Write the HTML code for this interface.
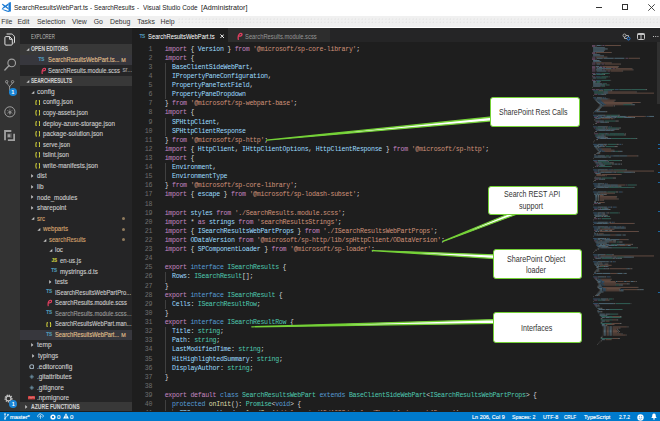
<!DOCTYPE html>
<html><head><meta charset="utf-8">
<style>
*{margin:0;padding:0;box-sizing:border-box}
html,body{width:660px;height:421px;overflow:hidden;background:#1e1e1e;font-family:"Liberation Sans",sans-serif}
.abs{position:absolute}
#title{left:0;top:0;width:660px;height:16px;background:#fff}
#title .t{left:13.6px;top:2.5px;line-height:10px;color:#222;white-space:nowrap}
#menu{left:0;top:16px;width:660px;height:10.5px;background:#f0f0f0}
#menu span{position:absolute;top:1px;font-size:6.9px;line-height:9px;color:#333;white-space:nowrap}
#menuline{left:0;top:26.5px;width:660px;height:1px;background:#fff}
#menudark{left:0;top:27.5px;width:660px;height:1px;background:#111}
#act{left:0;top:28px;width:20px;height:383px;background:#333}
#side{left:20px;top:28px;width:112px;height:383px;background:#252526;overflow:hidden}
#editor{left:132px;top:28px;width:528px;height:383px;background:#1e1e1e;overflow:hidden}
#tabs{left:0;top:0;width:528px;height:14px;background:#252526}
.tab{position:absolute;top:0;height:14px}
.ln{position:absolute;left:0;width:528px;height:9.1px;line-height:9.1px;white-space:pre;font-family:"Liberation Mono",monospace;font-size:6.6px;letter-spacing:-0.273px;color:#d4d4d4}
.ln .num{position:absolute;right:507.8px;color:#6e6e6e;text-align:right}
.ln .tx{position:absolute;left:32.65px}
#status{left:0;top:411.7px;width:660px;height:9.3px;background:#007acc;color:#fff}
#status span{position:absolute;top:1.8px;font-size:5.9px;line-height:7px;white-space:nowrap;-webkit-text-stroke:0.15px #fff}
.row{position:absolute;left:0;width:112px;height:10.53px;line-height:10.53px;font-size:6.3px;color:#ccc;white-space:nowrap}
.row .x{position:absolute}
.row span.x{-webkit-text-stroke:0.12px currentColor}
.row .nm{position:absolute;overflow:hidden;text-overflow:ellipsis}
.hdr{background:#383838;font-weight:bold;color:#ccc}
.callout{position:absolute;background:#fff;border:1.5px solid #7ed321;border-radius:3px;color:#3a3a3a;font-size:8px;line-height:10px;text-align:center;display:flex;align-items:center;justify-content:center}
.callout div{transform:scaleX(0.88);white-space:nowrap}
</style></head><body>
<div id="title" class="abs">
  <svg class="abs" style="left:0;top:0" width="13" height="13" viewBox="0 0 13 13">
    <g fill="#1a7ad4">
    <path d="M8.5 2.7 L10.9 2.0 V11.5 L8.5 10.9 Z"/>
    <path d="M1.4 9.0 C3.8 9.4 6.3 10.2 8.5 10.9 L10.9 11.5 L8.4 12.0 C6.2 11.5 3.3 10.3 1.4 9.0 Z"/>
    <path d="M1.8 4.3 L2.7 3.7 L5.3 5.6 L8.5 3.2 V4.9 L6.5 6.4 L8.5 7.9 V9.6 L5.3 7.2 L2.7 9.0 L1.8 8.4 L4.0 6.4 Z"/>
    </g>
  </svg>
  <div class="abs t" style="left:13.70px;transform:scaleX(0.8432);transform-origin:0 50%;font-size:7.7px;">SearchResultsWebPart.ts</div><div class="abs t" style="left:90.10px;transform:scaleX(0.7805);transform-origin:0 50%;font-size:7.7px;">-</div><div class="abs t" style="left:94.40px;transform:scaleX(0.8140);transform-origin:0 50%;font-size:7.7px;">SearchResults</div><div class="abs t" style="left:137.40px;transform:scaleX(0.7805);transform-origin:0 50%;font-size:7.7px;">-</div><div class="abs t" style="left:142.60px;transform:scaleX(0.8368);transform-origin:0 50%;font-size:7.7px;">Visual Studio Code</div><div class="abs t" style="left:200.80px;transform:scaleX(0.9362);transform-origin:0 50%;font-size:7.7px;">[Administrator]</div>
  <div class="abs" style="left:596px;top:6.5px;width:6px;height:1px;background:#333"></div>
  <div class="abs" style="left:622px;top:4px;width:6px;height:6px;border:1px solid #333"></div>
  <svg class="abs" style="left:648px;top:4px" width="7" height="7" viewBox="0 0 7 7"><path d="M0.3 0.3 L6.7 6.7 M6.7 0.3 L0.3 6.7" stroke="#333" stroke-width="0.9"/></svg>
</div>
<div id="menu" class="abs">
  <span style="left:1.2px">File</span>
  <span style="left:17.5px">Edit</span>
  <span style="left:37px">Selection</span>
  <span style="left:72px">View</span>
  <span style="left:93.7px">Go</span>
  <span style="left:110px">Debug</span>
  <span style="left:137.3px">Tasks</span>
  <span style="left:160.5px">Help</span>
  <div class="abs" style="left:178px;top:2px;width:482px;height:7px;background-image:radial-gradient(circle at 1px 1px,#e2e2e2 0.5px,transparent 0.8px);background-size:3.4px 3.4px"></div>
</div>
<div id="menuline" class="abs"></div>
<div id="menudark" class="abs"></div>

<div id="act" class="abs">
<svg class="abs" style="left:4px;top:5px" width="12" height="13" viewBox="0 0 12 13"><path d="M2.6 1.0 H7.6 C8.4 1.0 10.5 3.1 10.5 3.9 V9.2 C10.5 9.8 10.1 10.1 9.6 10.1" stroke="#e8e8e8" stroke-width="0.95" fill="none"/><path d="M0.9 4.6 Q0.9 3.6 1.9 3.6 H5.6 L8.3 6.3 V11.1 Q8.3 12.1 7.3 12.1 H1.9 Q0.9 12.1 0.9 11.1 Z M5.6 3.6 V6.3 H8.3" stroke="#e8e8e8" stroke-width="0.95" fill="none" stroke-linejoin="round"/></svg>
<svg class="abs" style="left:3.5px;top:29.5px" width="13" height="13" viewBox="0 0 13 13"><circle cx="7.7" cy="4.9" r="3.8" stroke="#a0a0a0" stroke-width="1.15" fill="none"/><path d="M5.1 7.6 L0.9 11.9" stroke="#a0a0a0" stroke-width="1.4" stroke-linecap="round"/></svg>
<svg class="abs" style="left:4.5px;top:52px" width="10" height="12" viewBox="0 0 10 12"><circle cx="1.7" cy="1.7" r="1.2" stroke="#a0a0a0" stroke-width="0.9" fill="none"/><circle cx="7.6" cy="1.7" r="1.2" stroke="#a0a0a0" stroke-width="0.9" fill="none"/><path d="M1.9 2.9 C2.2 5 4.6 5.2 4.6 7 V11 M7.4 2.9 C7.1 5 4.6 5.2 4.6 7" stroke="#a0a0a0" stroke-width="0.9" fill="none"/></svg>
<div class="abs" style="left:8.6px;top:60.2px;width:8.6px;height:8.2px;border-radius:50%;background:#1a85d6;color:#fff;font-size:5.6px;line-height:8.2px;text-align:center;font-weight:bold">1</div>
<svg class="abs" style="left:3.9px;top:78px" width="12" height="12" viewBox="0 0 12 12"><circle cx="5.85" cy="5.85" r="5.1" stroke="#a0a0a0" stroke-width="1" fill="none"/><path d="M5.85 2.6 V9.1 M3 4.2 L8.7 7.5 M8.7 4.2 L3 7.5" stroke="#a0a0a0" stroke-width="0.55" opacity="0.8"/><ellipse cx="6" cy="6.3" rx="1.3" ry="1.6" fill="#a0a0a0" opacity="0.7"/></svg>
<svg class="abs" style="left:4.1px;top:102px" width="11.2" height="11.2" viewBox="0 0 11 11"><path d="M1 10 V1 H7.2 M10 3.8 V10 H3.8" stroke="#a0a0a0" stroke-width="1.8" fill="none"/><rect x="3.2" y="3.2" width="4.6" height="4.6" fill="#555"/><rect x="3.6" y="4.2" width="2.6" height="2.8" fill="#a0a0a0"/></svg>
<svg class="abs" style="left:4.1px;top:366.4px" width="9" height="9" viewBox="0 0 9 9"><circle cx="4.5" cy="4.5" r="3.3" stroke="#c4c4c4" stroke-width="1.5" fill="none" stroke-dasharray="1.3 0.9"/><circle cx="4.5" cy="4.5" r="2.4" stroke="#c4c4c4" stroke-width="1.1" fill="none"/></svg>
<div class="abs" style="left:9.2px;top:371.8px;width:8px;height:8px;border-radius:50%;background:#1a85d6;color:#fff;font-size:5.4px;line-height:8px;text-align:center;font-weight:bold">1</div>
</div>

<div id="side" class="abs">
<div class="abs" style="left:10.9px;top:4.6px;line-height:8px;white-space:nowrap;transform:scaleX(0.6625);transform-origin:0 50%;font-size:6.6px;color:#bbb;">EXPLORER</div>
<div class="row hdr" style="top:16.20px"><svg class="x" style="left:6.20px;top:4.1px" width="4" height="3" viewBox="0 0 4 3"><path d="M3.3 0 V2.8 H0.3 Z" fill="#c5c5c5"/></svg><span class="x" style="left:10.8px;top:0.2px;transform:scaleX(0.7141);transform-origin:0 50%;font-size:6.9px;font-weight:bold;">OPEN EDITORS</span></div>
<div class="row" style="top:26.77px;background:#37373d;"><span class="x" style="left:18.50px;top:0;font-size:4.6px;font-weight:bold;color:#519aba;letter-spacing:-0.1px">TS</span><span class="x" style="left:27.80px;top:0.4px;color:#e2c08d;transform:scaleX(0.8460);transform-origin:0 50%;font-size:6.9px;">SearchResultsWebPart.ts...</span><span class="x" style="left:101.20px;color:#e2c08d;font-size:5.4px">M</span></div>
<div class="row" style="top:37.33px;"><svg class="x" style="left:20.80px;top:1.6px" width="5.5" height="7.3" viewBox="0 0 6 8"><path d="M1.3 7.4 C1.0 5.6 1.1 3.4 2.3 2.1 C3.3 1.0 5.1 1.1 5.0 2.4 C4.9 3.7 3.3 4.4 1.9 4.1" stroke="#e23f60" stroke-width="1.3" fill="none" stroke-linecap="round"/></svg><span class="x" style="left:27.80px;top:0.4px;color:#cccccc;transform:scaleX(0.8444);transform-origin:0 50%;font-size:6.9px;">SearchResults.module.scss</span><span class="x" style="left:102.40px;color:#999;font-size:6.3px">sr...</span></div>
<div class="row hdr" style="top:47.90px"><svg class="x" style="left:6.20px;top:4.1px" width="4" height="3" viewBox="0 0 4 3"><path d="M3.3 0 V2.8 H0.3 Z" fill="#c5c5c5"/></svg><span class="x" style="left:10.8px;top:0.2px;transform:scaleX(0.6782);transform-origin:0 50%;font-size:6.9px;font-weight:bold;">SEARCHRESULTS</span></div>
<div class="row" style="top:58.47px"><svg class="x" style="left:11.40px;top:4.1px" width="4" height="3" viewBox="0 0 4 3"><path d="M3.3 0 V2.8 H0.3 Z" fill="#c5c5c5"/></svg><span class="x" style="left:17.10px;top:0.4px;color:#ccc;transform:scaleX(0.9570);transform-origin:0 50%;font-size:6.9px;">config</span></div>
<div class="row" style="top:69.03px;"><svg class="x" style="left:14.60px;top:2.6px" width="5.6" height="5.6" viewBox="0 0 6 6"><path d="M1.9 0.4 C1.1 0.4 1.1 0.9 1.1 1.8 C1.1 2.6 0.9 3 0.4 3 C0.9 3 1.1 3.4 1.1 4.2 C1.1 5.1 1.1 5.6 1.9 5.6 M4.1 0.4 C4.9 0.4 4.9 0.9 4.9 1.8 C4.9 2.6 5.1 3 5.6 3 C5.1 3 4.9 3.4 4.9 4.2 C4.9 5.1 4.9 5.6 4.1 5.6" stroke="#d6d63c" stroke-width="1.15" fill="none"/></svg><span class="x" style="left:23.10px;top:0.4px;color:#ccc;transform:scaleX(0.9073);transform-origin:0 50%;font-size:6.9px;">config.json</span></div>
<div class="row" style="top:79.60px;"><svg class="x" style="left:14.60px;top:2.6px" width="5.6" height="5.6" viewBox="0 0 6 6"><path d="M1.9 0.4 C1.1 0.4 1.1 0.9 1.1 1.8 C1.1 2.6 0.9 3 0.4 3 C0.9 3 1.1 3.4 1.1 4.2 C1.1 5.1 1.1 5.6 1.9 5.6 M4.1 0.4 C4.9 0.4 4.9 0.9 4.9 1.8 C4.9 2.6 5.1 3 5.6 3 C5.1 3 4.9 3.4 4.9 4.2 C4.9 5.1 4.9 5.6 4.1 5.6" stroke="#d6d63c" stroke-width="1.15" fill="none"/></svg><span class="x" style="left:23.10px;top:0.4px;color:#ccc;transform:scaleX(0.8748);transform-origin:0 50%;font-size:6.9px;">copy-assets.json</span></div>
<div class="row" style="top:90.17px;"><svg class="x" style="left:14.60px;top:2.6px" width="5.6" height="5.6" viewBox="0 0 6 6"><path d="M1.9 0.4 C1.1 0.4 1.1 0.9 1.1 1.8 C1.1 2.6 0.9 3 0.4 3 C0.9 3 1.1 3.4 1.1 4.2 C1.1 5.1 1.1 5.6 1.9 5.6 M4.1 0.4 C4.9 0.4 4.9 0.9 4.9 1.8 C4.9 2.6 5.1 3 5.6 3 C5.1 3 4.9 3.4 4.9 4.2 C4.9 5.1 4.9 5.6 4.1 5.6" stroke="#d6d63c" stroke-width="1.15" fill="none"/></svg><span class="x" style="left:23.10px;top:0.4px;color:#ccc;transform:scaleX(0.9025);transform-origin:0 50%;font-size:6.9px;">deploy-azure-storage.json</span></div>
<div class="row" style="top:100.74px;"><svg class="x" style="left:14.60px;top:2.6px" width="5.6" height="5.6" viewBox="0 0 6 6"><path d="M1.9 0.4 C1.1 0.4 1.1 0.9 1.1 1.8 C1.1 2.6 0.9 3 0.4 3 C0.9 3 1.1 3.4 1.1 4.2 C1.1 5.1 1.1 5.6 1.9 5.6 M4.1 0.4 C4.9 0.4 4.9 0.9 4.9 1.8 C4.9 2.6 5.1 3 5.6 3 C5.1 3 4.9 3.4 4.9 4.2 C4.9 5.1 4.9 5.6 4.1 5.6" stroke="#d6d63c" stroke-width="1.15" fill="none"/></svg><span class="x" style="left:23.10px;top:0.4px;color:#ccc;transform:scaleX(0.8986);transform-origin:0 50%;font-size:6.9px;">package-solution.json</span></div>
<div class="row" style="top:111.30px;"><svg class="x" style="left:14.60px;top:2.6px" width="5.6" height="5.6" viewBox="0 0 6 6"><path d="M1.9 0.4 C1.1 0.4 1.1 0.9 1.1 1.8 C1.1 2.6 0.9 3 0.4 3 C0.9 3 1.1 3.4 1.1 4.2 C1.1 5.1 1.1 5.6 1.9 5.6 M4.1 0.4 C4.9 0.4 4.9 0.9 4.9 1.8 C4.9 2.6 5.1 3 5.6 3 C5.1 3 4.9 3.4 4.9 4.2 C4.9 5.1 4.9 5.6 4.1 5.6" stroke="#d6d63c" stroke-width="1.15" fill="none"/></svg><span class="x" style="left:23.10px;top:0.4px;color:#ccc;transform:scaleX(0.8629);transform-origin:0 50%;font-size:6.9px;">serve.json</span></div>
<div class="row" style="top:121.87px;"><svg class="x" style="left:14.60px;top:2.6px" width="5.6" height="5.6" viewBox="0 0 6 6"><path d="M1.9 0.4 C1.1 0.4 1.1 0.9 1.1 1.8 C1.1 2.6 0.9 3 0.4 3 C0.9 3 1.1 3.4 1.1 4.2 C1.1 5.1 1.1 5.6 1.9 5.6 M4.1 0.4 C4.9 0.4 4.9 0.9 4.9 1.8 C4.9 2.6 5.1 3 5.6 3 C5.1 3 4.9 3.4 4.9 4.2 C4.9 5.1 4.9 5.6 4.1 5.6" stroke="#d6d63c" stroke-width="1.15" fill="none"/></svg><span class="x" style="left:23.10px;top:0.4px;color:#ccc;transform:scaleX(0.9014);transform-origin:0 50%;font-size:6.9px;">tslint.json</span></div>
<div class="row" style="top:132.44px;"><svg class="x" style="left:14.60px;top:2.6px" width="5.6" height="5.6" viewBox="0 0 6 6"><path d="M1.9 0.4 C1.1 0.4 1.1 0.9 1.1 1.8 C1.1 2.6 0.9 3 0.4 3 C0.9 3 1.1 3.4 1.1 4.2 C1.1 5.1 1.1 5.6 1.9 5.6 M4.1 0.4 C4.9 0.4 4.9 0.9 4.9 1.8 C4.9 2.6 5.1 3 5.6 3 C5.1 3 4.9 3.4 4.9 4.2 C4.9 5.1 4.9 5.6 4.1 5.6" stroke="#d6d63c" stroke-width="1.15" fill="none"/></svg><span class="x" style="left:23.10px;top:0.4px;color:#ccc;transform:scaleX(0.9016);transform-origin:0 50%;font-size:6.9px;">write-manifests.json</span></div>
<div class="row" style="top:143.00px"><svg class="x" style="left:11.30px;top:3.1px" width="3" height="4" viewBox="0 0 3 4"><path d="M0.2 0.1 L2.4 1.9 L0.2 3.7 Z" fill="#c5c5c5"/></svg><span class="x" style="left:17.40px;top:0.4px;color:#ccc;transform:scaleX(0.8943);transform-origin:0 50%;font-size:6.9px;">dist</span></div>
<div class="row" style="top:153.57px"><svg class="x" style="left:11.30px;top:3.1px" width="3" height="4" viewBox="0 0 3 4"><path d="M0.2 0.1 L2.4 1.9 L0.2 3.7 Z" fill="#c5c5c5"/></svg><span class="x" style="left:17.40px;top:0.4px;color:#ccc;transform:scaleX(0.9412);transform-origin:0 50%;font-size:6.9px;">lib</span></div>
<div class="row" style="top:164.14px"><svg class="x" style="left:11.30px;top:3.1px" width="3" height="4" viewBox="0 0 3 4"><path d="M0.2 0.1 L2.4 1.9 L0.2 3.7 Z" fill="#c5c5c5"/></svg><span class="x" style="left:17.40px;top:0.4px;color:#ccc;transform:scaleX(0.8890);transform-origin:0 50%;font-size:6.9px;">node_modules</span></div>
<div class="row" style="top:174.70px"><svg class="x" style="left:11.30px;top:3.1px" width="3" height="4" viewBox="0 0 3 4"><path d="M0.2 0.1 L2.4 1.9 L0.2 3.7 Z" fill="#c5c5c5"/></svg><span class="x" style="left:17.20px;top:0.4px;color:#ccc;transform:scaleX(0.9103);transform-origin:0 50%;font-size:6.9px;">sharepoint</span></div>
<div class="row" style="top:185.27px"><svg class="x" style="left:11.20px;top:4.1px" width="4" height="3" viewBox="0 0 4 3"><path d="M3.3 0 V2.8 H0.3 Z" fill="#c5c5c5"/></svg><span class="x" style="left:17.10px;top:0.4px;color:#d7a46e;transform:scaleX(0.8707);transform-origin:0 50%;font-size:6.9px;">src</span><div class="x" style="left:102.20px;top:3.8px;width:3.2px;height:3.2px;border-radius:50%;background:#8f7a5c"></div></div>
<div class="row" style="top:195.84px"><svg class="x" style="left:17.10px;top:4.1px" width="4" height="3" viewBox="0 0 4 3"><path d="M3.3 0 V2.8 H0.3 Z" fill="#c5c5c5"/></svg><span class="x" style="left:23.10px;top:0.4px;color:#d7a46e;transform:scaleX(0.9010);transform-origin:0 50%;font-size:6.9px;">webparts</span><div class="x" style="left:102.20px;top:3.8px;width:3.2px;height:3.2px;border-radius:50%;background:#8f7a5c"></div></div>
<div class="row" style="top:206.41px"><svg class="x" style="left:22.90px;top:4.1px" width="4" height="3" viewBox="0 0 4 3"><path d="M3.3 0 V2.8 H0.3 Z" fill="#c5c5c5"/></svg><span class="x" style="left:28.90px;top:0.4px;color:#d7a46e;transform:scaleX(0.8404);transform-origin:0 50%;font-size:6.9px;">searchResults</span><div class="x" style="left:102.20px;top:3.8px;width:3.2px;height:3.2px;border-radius:50%;background:#8f7a5c"></div></div>
<div class="row" style="top:216.97px"><svg class="x" style="left:28.70px;top:4.1px" width="4" height="3" viewBox="0 0 4 3"><path d="M3.3 0 V2.8 H0.3 Z" fill="#c5c5c5"/></svg><span class="x" style="left:34.70px;top:0.4px;color:#ccc;transform:scaleX(0.9078);transform-origin:0 50%;font-size:6.9px;">loc</span></div>
<div class="row" style="top:227.54px;"><span class="x" style="left:31.60px;top:0;font-size:4.6px;font-weight:bold;color:#cbcb41;letter-spacing:-0.1px">JS</span><span class="x" style="left:40.10px;top:0.4px;color:#ccc;transform:scaleX(0.8782);transform-origin:0 50%;font-size:6.9px;">en-us.js</span></div>
<div class="row" style="top:238.11px;"><span class="x" style="left:31.30px;top:0;font-size:4.6px;font-weight:bold;color:#519aba;letter-spacing:-0.1px">TS</span><span class="x" style="left:40.10px;top:0.4px;color:#ccc;transform:scaleX(0.8914);transform-origin:0 50%;font-size:6.9px;">mystrings.d.ts</span></div>
<div class="row" style="top:248.67px"><svg class="x" style="left:28.50px;top:3.1px" width="3" height="4" viewBox="0 0 3 4"><path d="M0.2 0.1 L2.4 1.9 L0.2 3.7 Z" fill="#c5c5c5"/></svg><span class="x" style="left:34.70px;top:0.4px;color:#ccc;transform:scaleX(0.8721);transform-origin:0 50%;font-size:6.9px;">tests</span></div>
<div class="row" style="top:259.24px;"><span class="x" style="left:26.20px;top:0;font-size:4.6px;font-weight:bold;color:#519aba;letter-spacing:-0.1px">TS</span><span class="x" style="left:34.70px;top:0.4px;color:#ccc;transform:scaleX(0.8467);transform-origin:0 50%;font-size:6.9px;">ISearchResultsWebPartPro...</span></div>
<div class="row" style="top:269.81px;"><svg class="x" style="left:26.70px;top:1.6px" width="5.5" height="7.3" viewBox="0 0 6 8"><path d="M1.3 7.4 C1.0 5.6 1.1 3.4 2.3 2.1 C3.3 1.0 5.1 1.1 5.0 2.4 C4.9 3.7 3.3 4.4 1.9 4.1" stroke="#e23f60" stroke-width="1.3" fill="none" stroke-linecap="round"/></svg><span class="x" style="left:34.70px;top:0.4px;color:#ccc;transform:scaleX(0.8456);transform-origin:0 50%;font-size:6.9px;">SearchResults.module.scss</span></div>
<div class="row" style="top:280.38px;"><span class="x" style="left:26.20px;top:0;font-size:4.6px;font-weight:bold;color:#519aba;letter-spacing:-0.1px">TS</span><span class="x" style="left:34.70px;top:0.4px;color:#9a9a9a;transform:scaleX(0.8428);transform-origin:0 50%;font-size:6.9px;">SearchResults.module.scss...</span></div>
<div class="row" style="top:290.94px;"><svg class="x" style="left:26.20px;top:2.6px" width="5.6" height="5.6" viewBox="0 0 6 6"><path d="M1.9 0.4 C1.1 0.4 1.1 0.9 1.1 1.8 C1.1 2.6 0.9 3 0.4 3 C0.9 3 1.1 3.4 1.1 4.2 C1.1 5.1 1.1 5.6 1.9 5.6 M4.1 0.4 C4.9 0.4 4.9 0.9 4.9 1.8 C4.9 2.6 5.1 3 5.6 3 C5.1 3 4.9 3.4 4.9 4.2 C4.9 5.1 4.9 5.6 4.1 5.6" stroke="#d6d63c" stroke-width="1.15" fill="none"/></svg><span class="x" style="left:34.70px;top:0.4px;color:#ccc;transform:scaleX(0.8265);transform-origin:0 50%;font-size:6.9px;">SearchResultsWebPart.man...</span></div>
<div class="row" style="top:301.51px;background:#37373d;"><span class="x" style="left:26.20px;top:0;font-size:4.6px;font-weight:bold;color:#519aba;letter-spacing:-0.1px">TS</span><span class="x" style="left:34.70px;top:0.4px;color:#e2c08d;transform:scaleX(0.8312);transform-origin:0 50%;font-size:6.9px;">SearchResultsWebPart...</span><span class="x" style="left:101.20px;color:#e2c08d;font-size:5.4px">M</span></div>
<div class="row" style="top:312.08px"><svg class="x" style="left:11.20px;top:3.1px" width="3" height="4" viewBox="0 0 3 4"><path d="M0.2 0.1 L2.4 1.9 L0.2 3.7 Z" fill="#c5c5c5"/></svg><span class="x" style="left:17.40px;top:0.4px;color:#ccc;transform:scaleX(0.9525);transform-origin:0 50%;font-size:6.9px;">temp</span></div>
<div class="row" style="top:322.64px"><svg class="x" style="left:11.50px;top:3.1px" width="3" height="4" viewBox="0 0 3 4"><path d="M0.2 0.1 L2.4 1.9 L0.2 3.7 Z" fill="#c5c5c5"/></svg><span class="x" style="left:17.50px;top:0.4px;color:#ccc;transform:scaleX(0.9247);transform-origin:0 50%;font-size:6.9px;">typings</span></div>
<div class="row" style="top:333.21px;"><svg class="x" style="left:8.80px;top:2.6px" width="5.5" height="5.5" viewBox="0 0 5.5 5.5"><circle cx="2.75" cy="2.75" r="2.0" stroke="#9fb0bd" stroke-width="1.1" fill="none"/></svg><span class="x" style="left:17.00px;top:0.4px;color:#ccc;transform:scaleX(0.9402);transform-origin:0 50%;font-size:6.9px;">.editorconfig</span></div>
<div class="row" style="top:343.78px;"><svg class="x" style="left:8.80px;top:2.6px" width="5.5" height="5.5" viewBox="0 0 5.5 5.5"><path d="M2.75 0.3 L5.2 2.75 L2.75 5.2 L0.3 2.75 Z" fill="#4a6472"/><path d="M2.75 1.6 L3.9 2.75 L2.75 3.9 L1.6 2.75 Z" fill="#6f8a98"/></svg><span class="x" style="left:17.00px;top:0.4px;color:#ccc;transform:scaleX(0.9268);transform-origin:0 50%;font-size:6.9px;">.gitattributes</span></div>
<div class="row" style="top:354.34px;"><svg class="x" style="left:8.80px;top:2.6px" width="5.5" height="5.5" viewBox="0 0 5.5 5.5"><path d="M2.75 0.3 L5.2 2.75 L2.75 5.2 L0.3 2.75 Z" fill="#4a6472"/><path d="M2.75 1.6 L3.9 2.75 L2.75 3.9 L1.6 2.75 Z" fill="#6f8a98"/></svg><span class="x" style="left:17.00px;top:0.4px;color:#ccc;transform:scaleX(0.9450);transform-origin:0 50%;font-size:6.9px;">.gitignore</span></div>
<div class="row" style="top:364.91px;"><svg class="x" style="left:8.10px;top:3.5px" width="7.2" height="3.6" viewBox="0 0 7.2 3.6"><rect x="0" y="0" width="7.2" height="3.4" fill="#c93636"/><path d="M1 2.6 V1 H2.6 V2.6 M3.6 2.6 V1 H6.2 V2.6 M4.9 1 V2.2" stroke="#e8a0a0" stroke-width="0.5" fill="none"/></svg><span class="x" style="left:17.00px;top:0.4px;color:#ccc;transform:scaleX(0.9338);transform-origin:0 50%;font-size:6.9px;">.npmignore</span></div>
<div class="row hdr" style="top:373.70px"><svg class="x" style="left:5.10px;top:3.1px" width="3" height="4" viewBox="0 0 3 4"><path d="M0.2 0.1 L2.4 1.9 L0.2 3.7 Z" fill="#c5c5c5"/></svg><span class="x" style="left:10.8px;top:0.2px;transform:scaleX(0.7381);transform-origin:0 50%;font-size:6.9px;font-weight:bold;">AZURE FUNCTIONS</span></div>
</div>

<div id="editor" class="abs">
  <div id="tabs" class="abs">
    <div class="tab" style="left:0;width:96px;background:#1e1e1e">
<span class="abs" style="left:7.4px;top:5.6px;font-size:4.8px;line-height:5px;font-weight:bold;color:#519aba;letter-spacing:-0.2px">TS</span><span class="abs" style="left:16.2px;top:5px;line-height:7px;color:#fff;white-space:nowrap;transform:scaleX(0.8323);transform-origin:0 50%;font-size:7px;">SearchResultsWebPart.ts</span><svg class="abs" style="left:87.6px;top:6.4px" width="4.4" height="4.4" viewBox="0 0 5 5"><path d="M0.5 0.5 L4.5 4.5 M4.5 0.5 L0.5 4.5" stroke="#fff" stroke-width="1.1"/></svg>
    </div>
    <div class="tab" style="left:96px;width:102px;background:#2d2d2d">
<svg class="abs" style="left:8.6px;top:4px" width="6" height="8" viewBox="0 0 6 8"><path d="M1.3 7.4 C1.0 5.6 1.1 3.4 2.3 2.1 C3.3 1.0 5.1 1.1 5.0 2.4 C4.9 3.7 3.3 4.4 1.9 4.1" stroke="#e23f60" stroke-width="1.3" fill="none" stroke-linecap="round"/></svg><span class="abs" style="left:17px;top:5px;line-height:7px;color:#969696;white-space:nowrap;transform:scaleX(0.8301);transform-origin:0 50%;font-size:7px;">SearchResults.module.scss</span>
    </div>
<svg class="abs" style="left:490px;top:4.5px" width="9" height="8" viewBox="0 0 9 8"><circle cx="2.5" cy="2.5" r="1.5" stroke="#c5c5c5" stroke-width="0.8" fill="none"/><circle cx="6.5" cy="5.5" r="1.5" stroke="#3794ff" stroke-width="0.8" fill="none"/><path d="M4 2.5 H6.5 V4 M2.5 4 V5.5 H5" stroke="#c5c5c5" stroke-width="0.8" fill="none"/></svg><svg class="abs" style="left:504.5px;top:4.8px" width="8" height="7" viewBox="0 0 8 7"><rect x="0.5" y="0.5" width="7" height="6" rx="1" stroke="#c5c5c5" stroke-width="1" fill="none"/><path d="M4 0.5 V6.5" stroke="#c5c5c5" stroke-width="1"/><rect x="0.5" y="0.5" width="7" height="1.5" fill="#c5c5c5"/></svg><div class="abs" style="left:521px;top:7.5px;width:1px;height:1px;background:#c5c5c5;box-shadow:2.2px 0 0 #c5c5c5,4.4px 0 0 #c5c5c5"></div>
  </div>
  <div class="abs" style="left:0;top:16.6px;width:528px;height:380px">
<div class="ln" style="top:0.00px"><span class="num">1</span><span class="tx"><span style="color:#c586c0">import</span> { <span style="color:#9cdcfe">Version</span> } <span style="color:#c586c0">from</span> <span style="color:#ce9178">&#x27;@microsoft/sp-core-library&#x27;</span>;</span></div>
<div class="ln" style="top:9.12px"><span class="num">2</span><span class="tx"><span style="color:#c586c0">import</span> {</span></div>
<div class="ln" style="top:18.23px"><div style="position:absolute;left:32.95px;top:0;width:0.8px;height:9.2px;background:#404040"></div><span class="num">3</span><span class="tx">  <span style="color:#9cdcfe">BaseClientSideWebPart</span>,</span></div>
<div class="ln" style="top:27.34px"><div style="position:absolute;left:32.95px;top:0;width:0.8px;height:9.2px;background:#404040"></div><span class="num">4</span><span class="tx">  <span style="color:#9cdcfe">IPropertyPaneConfiguration</span>,</span></div>
<div class="ln" style="top:36.46px"><div style="position:absolute;left:32.95px;top:0;width:0.8px;height:9.2px;background:#404040"></div><span class="num">5</span><span class="tx">  <span style="color:#9cdcfe">PropertyPaneTextField</span>,</span></div>
<div class="ln" style="top:45.58px"><div style="position:absolute;left:32.95px;top:0;width:0.8px;height:9.2px;background:#404040"></div><span class="num">6</span><span class="tx">  <span style="color:#9cdcfe">PropertyPaneDropdown</span></span></div>
<div class="ln" style="top:54.69px"><span class="num">7</span><span class="tx">} <span style="color:#c586c0">from</span> <span style="color:#ce9178">&#x27;@microsoft/sp-webpart-base&#x27;</span>;</span></div>
<div class="ln" style="top:63.80px"><span class="num">8</span><span class="tx"><span style="color:#c586c0">import</span> {</span></div>
<div class="ln" style="top:72.92px"><div style="position:absolute;left:32.95px;top:0;width:0.8px;height:9.2px;background:#404040"></div><span class="num">9</span><span class="tx">  <span style="color:#9cdcfe">SPHttpClient</span>,</span></div>
<div class="ln" style="top:82.03px"><div style="position:absolute;left:32.95px;top:0;width:0.8px;height:9.2px;background:#404040"></div><span class="num">10</span><span class="tx">  <span style="color:#9cdcfe">SPHttpClientResponse</span></span></div>
<div class="ln" style="top:91.15px"><span class="num">11</span><span class="tx">} <span style="color:#c586c0">from</span> <span style="color:#ce9178">&#x27;@microsoft/sp-http&#x27;</span>;</span></div>
<div class="ln" style="top:100.27px"><span class="num">12</span><span class="tx"><span style="color:#c586c0">import</span> { <span style="color:#9cdcfe">HttpClient</span>, <span style="color:#9cdcfe">IHttpClientOptions</span>, <span style="color:#9cdcfe">HttpClientResponse</span> } <span style="color:#c586c0">from</span> <span style="color:#ce9178">&#x27;@microsoft/sp-http&#x27;</span>;</span></div>
<div class="ln" style="top:109.38px"><span class="num">13</span><span class="tx"><span style="color:#c586c0">import</span> {</span></div>
<div class="ln" style="top:118.50px"><div style="position:absolute;left:32.95px;top:0;width:0.8px;height:9.2px;background:#404040"></div><span class="num">14</span><span class="tx">  <span style="color:#9cdcfe">Environment</span>,</span></div>
<div class="ln" style="top:127.61px"><div style="position:absolute;left:32.95px;top:0;width:0.8px;height:9.2px;background:#404040"></div><span class="num">15</span><span class="tx">  <span style="color:#9cdcfe">EnvironmentType</span></span></div>
<div class="ln" style="top:136.72px"><span class="num">16</span><span class="tx">} <span style="color:#c586c0">from</span> <span style="color:#ce9178">&#x27;@microsoft/sp-core-library&#x27;</span>;</span></div>
<div class="ln" style="top:145.84px"><span class="num">17</span><span class="tx"><span style="color:#c586c0">import</span> { <span style="color:#9cdcfe">escape</span> } <span style="color:#c586c0">from</span> <span style="color:#ce9178">&#x27;@microsoft/sp-lodash-subset&#x27;</span>;</span></div>
<div class="ln" style="top:154.96px"><span class="num">18</span><span class="tx"></span></div>
<div class="ln" style="top:164.07px"><span class="num">19</span><span class="tx"><span style="color:#c586c0">import</span> <span style="color:#9cdcfe">styles</span> <span style="color:#c586c0">from</span> <span style="color:#ce9178">&#x27;./SearchResults.module.scss&#x27;</span>;</span></div>
<div class="ln" style="top:173.19px"><span class="num">20</span><span class="tx"><span style="color:#c586c0">import</span> * <span style="color:#c586c0">as</span> <span style="color:#9cdcfe">strings</span> <span style="color:#c586c0">from</span> <span style="color:#ce9178">&#x27;searchResultsStrings&#x27;</span>;</span></div>
<div class="ln" style="top:182.30px"><span class="num">21</span><span class="tx"><span style="color:#c586c0">import</span> { <span style="color:#9cdcfe">ISearchResultsWebPartProps</span> } <span style="color:#c586c0">from</span> <span style="color:#ce9178">&#x27;./ISearchResultsWebPartProps&#x27;</span>;</span></div>
<div class="ln" style="top:191.41px"><span class="num">22</span><span class="tx"><span style="color:#c586c0">import</span> <span style="color:#9cdcfe">ODataVersion</span> <span style="color:#c586c0">from</span> <span style="color:#ce9178">&#x27;@microsoft/sp-http/lib/spHttpClient/ODataVersion&#x27;</span>;</span></div>
<div class="ln" style="top:200.53px"><span class="num">23</span><span class="tx"><span style="color:#c586c0">import</span> { <span style="color:#9cdcfe">SPComponentLoader</span> } <span style="color:#c586c0">from</span> <span style="color:#ce9178">&#x27;@microsoft/sp-loader&#x27;</span>;</span></div>
<div class="ln" style="top:209.65px"><span class="num">24</span><span class="tx"></span></div>
<div class="ln" style="top:218.76px"><span class="num">25</span><span class="tx"><span style="color:#c586c0">export</span> <span style="color:#569cd6">interface</span> <span style="color:#4ec9b0">ISearchResults</span> {</span></div>
<div class="ln" style="top:227.88px"><div style="position:absolute;left:32.95px;top:0;width:0.8px;height:9.2px;background:#404040"></div><span class="num">26</span><span class="tx">  <span style="color:#9cdcfe">Rows</span>: <span style="color:#4ec9b0">ISearchResult</span>[];</span></div>
<div class="ln" style="top:236.99px"><span class="num">27</span><span class="tx">}</span></div>
<div class="ln" style="top:246.11px"><span class="num">28</span><span class="tx"><span style="color:#c586c0">export</span> <span style="color:#569cd6">interface</span> <span style="color:#4ec9b0">ISearchResult</span> {</span></div>
<div class="ln" style="top:255.22px"><div style="position:absolute;left:32.95px;top:0;width:0.8px;height:9.2px;background:#404040"></div><span class="num">29</span><span class="tx">  <span style="color:#9cdcfe">Cells</span>: <span style="color:#4ec9b0">ISearchResultRow</span>;</span></div>
<div class="ln" style="top:264.33px"><span class="num">30</span><span class="tx">}</span></div>
<div class="ln" style="top:273.45px"><span class="num">31</span><span class="tx"><span style="color:#c586c0">export</span> <span style="color:#569cd6">interface</span> <span style="color:#4ec9b0">ISearchResultRow</span> {</span></div>
<div class="ln" style="top:282.56px"><div style="position:absolute;left:32.95px;top:0;width:0.8px;height:9.2px;background:#404040"></div><span class="num">32</span><span class="tx">  <span style="color:#9cdcfe">Title</span>: <span style="color:#4ec9b0">string</span>;</span></div>
<div class="ln" style="top:291.68px"><div style="position:absolute;left:32.95px;top:0;width:0.8px;height:9.2px;background:#404040"></div><span class="num">33</span><span class="tx">  <span style="color:#9cdcfe">Path</span>: <span style="color:#4ec9b0">string</span>;</span></div>
<div class="ln" style="top:300.80px"><div style="position:absolute;left:32.95px;top:0;width:0.8px;height:9.2px;background:#404040"></div><span class="num">34</span><span class="tx">  <span style="color:#9cdcfe">LastModifiedTime</span>: <span style="color:#4ec9b0">string</span>;</span></div>
<div class="ln" style="top:309.91px"><div style="position:absolute;left:32.95px;top:0;width:0.8px;height:9.2px;background:#404040"></div><span class="num">35</span><span class="tx">  <span style="color:#9cdcfe">HitHighlightedSummary</span>: <span style="color:#4ec9b0">string</span>;</span></div>
<div class="ln" style="top:319.03px"><div style="position:absolute;left:32.95px;top:0;width:0.8px;height:9.2px;background:#404040"></div><span class="num">36</span><span class="tx">  <span style="color:#9cdcfe">DisplayAuthor</span>: <span style="color:#4ec9b0">string</span>;</span></div>
<div class="ln" style="top:328.14px"><span class="num">37</span><span class="tx">}</span></div>
<div class="ln" style="top:337.25px"><span class="num">38</span><span class="tx"></span></div>
<div class="ln" style="top:346.37px"><span class="num">39</span><span class="tx"><span style="color:#c586c0">export</span> <span style="color:#c586c0">default</span> <span style="color:#569cd6">class</span> <span style="color:#4ec9b0">SearchResultsWebPart</span> <span style="color:#569cd6">extends</span> <span style="color:#4ec9b0">BaseClientSideWebPart</span>&lt;<span style="color:#4ec9b0">ISearchResultsWebPartProps</span>&gt; {</span></div>
<div class="ln" style="top:355.49px"><div style="position:absolute;left:32.95px;top:0;width:0.8px;height:9.2px;background:#404040"></div><span class="num">40</span><span class="tx">  <span style="color:#569cd6">protected</span> <span style="color:#dcdcaa">onInit</span>(): <span style="color:#4ec9b0">Promise</span>&lt;<span style="color:#569cd6">void</span>&gt; {</span></div>
<div class="ln" style="top:364.60px"><div style="position:absolute;left:32.95px;top:0;width:0.8px;height:9.2px;background:#404040"></div><div style="position:absolute;left:40.32px;top:0;width:0.8px;height:9.2px;background:#404040"></div><span class="num">41</span><span class="tx">    <span style="color:#9cdcfe">SPComponentLoader</span>.<span style="color:#dcdcaa">loadCss</span>(<span style="color:#ce9178">&#x27;//_layouts/15/1033/styles/Themable/search15.css&#x27;</span>);</span></div>
  </div>
<svg class="abs" style="left:460px;top:16.6px;opacity:0.42" width="64" height="300" viewBox="0 0 64 300"><rect x="0.00" y="0.00" width="3.27" height="0.9" fill="#c586c0"/><rect x="3.82" y="0.00" width="0.55" height="0.9" fill="#d4d4d4"/><rect x="4.91" y="0.00" width="3.82" height="0.9" fill="#9cdcfe"/><rect x="9.27" y="0.00" width="0.55" height="0.9" fill="#d4d4d4"/><rect x="10.36" y="0.00" width="2.18" height="0.9" fill="#c586c0"/><rect x="13.08" y="0.00" width="15.26" height="0.9" fill="#ce9178"/><rect x="28.34" y="0.00" width="0.55" height="0.9" fill="#d4d4d4"/><rect x="0.00" y="1.16" width="3.27" height="0.9" fill="#c586c0"/><rect x="3.82" y="1.16" width="0.55" height="0.9" fill="#d4d4d4"/><rect x="1.09" y="2.33" width="11.45" height="0.9" fill="#9cdcfe"/><rect x="12.54" y="2.33" width="0.55" height="0.9" fill="#d4d4d4"/><rect x="1.09" y="3.49" width="14.17" height="0.9" fill="#9cdcfe"/><rect x="15.26" y="3.49" width="0.55" height="0.9" fill="#d4d4d4"/><rect x="1.09" y="4.65" width="11.45" height="0.9" fill="#9cdcfe"/><rect x="12.54" y="4.65" width="0.55" height="0.9" fill="#d4d4d4"/><rect x="1.09" y="5.82" width="10.90" height="0.9" fill="#9cdcfe"/><rect x="0.00" y="6.98" width="0.55" height="0.9" fill="#d4d4d4"/><rect x="1.09" y="6.98" width="2.18" height="0.9" fill="#c586c0"/><rect x="3.82" y="6.98" width="15.26" height="0.9" fill="#ce9178"/><rect x="19.08" y="6.98" width="0.55" height="0.9" fill="#d4d4d4"/><rect x="0.00" y="8.14" width="3.27" height="0.9" fill="#c586c0"/><rect x="3.82" y="8.14" width="0.55" height="0.9" fill="#d4d4d4"/><rect x="1.09" y="9.30" width="6.54" height="0.9" fill="#9cdcfe"/><rect x="7.63" y="9.30" width="0.55" height="0.9" fill="#d4d4d4"/><rect x="1.09" y="10.47" width="10.90" height="0.9" fill="#9cdcfe"/><rect x="0.00" y="11.63" width="0.55" height="0.9" fill="#d4d4d4"/><rect x="1.09" y="11.63" width="2.18" height="0.9" fill="#c586c0"/><rect x="3.82" y="11.63" width="10.90" height="0.9" fill="#ce9178"/><rect x="14.72" y="11.63" width="0.55" height="0.9" fill="#d4d4d4"/><rect x="0.00" y="12.79" width="3.27" height="0.9" fill="#c586c0"/><rect x="3.82" y="12.79" width="0.55" height="0.9" fill="#d4d4d4"/><rect x="4.91" y="12.79" width="5.45" height="0.9" fill="#9cdcfe"/><rect x="10.36" y="12.79" width="0.55" height="0.9" fill="#d4d4d4"/><rect x="11.45" y="12.79" width="9.81" height="0.9" fill="#9cdcfe"/><rect x="21.26" y="12.79" width="0.55" height="0.9" fill="#d4d4d4"/><rect x="22.35" y="12.79" width="9.81" height="0.9" fill="#9cdcfe"/><rect x="32.70" y="12.79" width="0.55" height="0.9" fill="#d4d4d4"/><rect x="33.79" y="12.79" width="2.18" height="0.9" fill="#c586c0"/><rect x="36.52" y="12.79" width="10.90" height="0.9" fill="#ce9178"/><rect x="47.42" y="12.79" width="0.55" height="0.9" fill="#d4d4d4"/><rect x="0.00" y="13.96" width="3.27" height="0.9" fill="#c586c0"/><rect x="3.82" y="13.96" width="0.55" height="0.9" fill="#d4d4d4"/><rect x="1.09" y="15.12" width="6.00" height="0.9" fill="#9cdcfe"/><rect x="7.09" y="15.12" width="0.55" height="0.9" fill="#d4d4d4"/><rect x="1.09" y="16.28" width="8.18" height="0.9" fill="#9cdcfe"/><rect x="0.00" y="17.45" width="0.55" height="0.9" fill="#d4d4d4"/><rect x="1.09" y="17.45" width="2.18" height="0.9" fill="#c586c0"/><rect x="3.82" y="17.45" width="15.26" height="0.9" fill="#ce9178"/><rect x="19.08" y="17.45" width="0.55" height="0.9" fill="#d4d4d4"/><rect x="0.00" y="18.61" width="3.27" height="0.9" fill="#c586c0"/><rect x="3.82" y="18.61" width="0.55" height="0.9" fill="#d4d4d4"/><rect x="4.91" y="18.61" width="3.27" height="0.9" fill="#9cdcfe"/><rect x="8.72" y="18.61" width="0.55" height="0.9" fill="#d4d4d4"/><rect x="9.81" y="18.61" width="2.18" height="0.9" fill="#c586c0"/><rect x="12.54" y="18.61" width="15.81" height="0.9" fill="#ce9178"/><rect x="28.34" y="18.61" width="0.55" height="0.9" fill="#d4d4d4"/><rect x="0.00" y="20.93" width="3.27" height="0.9" fill="#c586c0"/><rect x="3.82" y="20.93" width="3.27" height="0.9" fill="#9cdcfe"/><rect x="7.63" y="20.93" width="2.18" height="0.9" fill="#c586c0"/><rect x="10.36" y="20.93" width="15.81" height="0.9" fill="#ce9178"/><rect x="26.16" y="20.93" width="0.55" height="0.9" fill="#d4d4d4"/><rect x="0.00" y="22.10" width="3.27" height="0.9" fill="#c586c0"/><rect x="3.82" y="22.10" width="0.55" height="0.9" fill="#d4d4d4"/><rect x="4.91" y="22.10" width="1.09" height="0.9" fill="#c586c0"/><rect x="6.54" y="22.10" width="3.82" height="0.9" fill="#9cdcfe"/><rect x="10.90" y="22.10" width="2.18" height="0.9" fill="#c586c0"/><rect x="13.63" y="22.10" width="11.99" height="0.9" fill="#ce9178"/><rect x="25.62" y="22.10" width="0.55" height="0.9" fill="#d4d4d4"/><rect x="0.00" y="23.26" width="3.27" height="0.9" fill="#c586c0"/><rect x="3.82" y="23.26" width="0.55" height="0.9" fill="#d4d4d4"/><rect x="4.91" y="23.26" width="14.17" height="0.9" fill="#9cdcfe"/><rect x="19.62" y="23.26" width="0.55" height="0.9" fill="#d4d4d4"/><rect x="20.71" y="23.26" width="2.18" height="0.9" fill="#c586c0"/><rect x="23.44" y="23.26" width="16.35" height="0.9" fill="#ce9178"/><rect x="39.79" y="23.26" width="0.55" height="0.9" fill="#d4d4d4"/><rect x="0.00" y="24.42" width="3.27" height="0.9" fill="#c586c0"/><rect x="3.82" y="24.42" width="6.54" height="0.9" fill="#9cdcfe"/><rect x="10.90" y="24.42" width="2.18" height="0.9" fill="#c586c0"/><rect x="13.63" y="24.42" width="27.25" height="0.9" fill="#ce9178"/><rect x="40.88" y="24.42" width="0.55" height="0.9" fill="#d4d4d4"/><rect x="0.00" y="25.59" width="3.27" height="0.9" fill="#c586c0"/><rect x="3.82" y="25.59" width="0.55" height="0.9" fill="#d4d4d4"/><rect x="4.91" y="25.59" width="9.27" height="0.9" fill="#9cdcfe"/><rect x="14.72" y="25.59" width="0.55" height="0.9" fill="#d4d4d4"/><rect x="15.81" y="25.59" width="2.18" height="0.9" fill="#c586c0"/><rect x="18.53" y="25.59" width="11.99" height="0.9" fill="#ce9178"/><rect x="30.52" y="25.59" width="0.55" height="0.9" fill="#d4d4d4"/><rect x="0.00" y="27.91" width="3.27" height="0.9" fill="#c586c0"/><rect x="3.82" y="27.91" width="4.91" height="0.9" fill="#569cd6"/><rect x="9.27" y="27.91" width="7.63" height="0.9" fill="#4ec9b0"/><rect x="17.44" y="27.91" width="0.55" height="0.9" fill="#d4d4d4"/><rect x="1.09" y="29.07" width="2.18" height="0.9" fill="#9cdcfe"/><rect x="3.27" y="29.07" width="0.55" height="0.9" fill="#d4d4d4"/><rect x="4.36" y="29.07" width="7.09" height="0.9" fill="#4ec9b0"/><rect x="11.45" y="29.07" width="1.64" height="0.9" fill="#d4d4d4"/><rect x="0.00" y="30.24" width="0.55" height="0.9" fill="#d4d4d4"/><rect x="0.00" y="31.40" width="3.27" height="0.9" fill="#c586c0"/><rect x="3.82" y="31.40" width="4.91" height="0.9" fill="#569cd6"/><rect x="9.27" y="31.40" width="7.09" height="0.9" fill="#4ec9b0"/><rect x="16.89" y="31.40" width="0.55" height="0.9" fill="#d4d4d4"/><rect x="1.09" y="32.56" width="2.73" height="0.9" fill="#9cdcfe"/><rect x="3.82" y="32.56" width="0.55" height="0.9" fill="#d4d4d4"/><rect x="4.91" y="32.56" width="8.72" height="0.9" fill="#4ec9b0"/><rect x="13.63" y="32.56" width="0.55" height="0.9" fill="#d4d4d4"/><rect x="0.00" y="33.73" width="0.55" height="0.9" fill="#d4d4d4"/><rect x="0.00" y="34.89" width="3.27" height="0.9" fill="#c586c0"/><rect x="3.82" y="34.89" width="4.91" height="0.9" fill="#569cd6"/><rect x="9.27" y="34.89" width="8.72" height="0.9" fill="#4ec9b0"/><rect x="18.53" y="34.89" width="0.55" height="0.9" fill="#d4d4d4"/><rect x="1.09" y="36.05" width="2.73" height="0.9" fill="#9cdcfe"/><rect x="3.82" y="36.05" width="0.55" height="0.9" fill="#d4d4d4"/><rect x="4.91" y="36.05" width="3.27" height="0.9" fill="#4ec9b0"/><rect x="8.18" y="36.05" width="0.55" height="0.9" fill="#d4d4d4"/><rect x="1.09" y="37.22" width="2.18" height="0.9" fill="#9cdcfe"/><rect x="3.27" y="37.22" width="0.55" height="0.9" fill="#d4d4d4"/><rect x="4.36" y="37.22" width="3.27" height="0.9" fill="#4ec9b0"/><rect x="7.63" y="37.22" width="0.55" height="0.9" fill="#d4d4d4"/><rect x="1.09" y="38.38" width="8.72" height="0.9" fill="#9cdcfe"/><rect x="9.81" y="38.38" width="0.55" height="0.9" fill="#d4d4d4"/><rect x="10.90" y="38.38" width="3.27" height="0.9" fill="#4ec9b0"/><rect x="14.17" y="38.38" width="0.55" height="0.9" fill="#d4d4d4"/><rect x="1.09" y="39.54" width="11.45" height="0.9" fill="#9cdcfe"/><rect x="12.54" y="39.54" width="0.55" height="0.9" fill="#d4d4d4"/><rect x="13.63" y="39.54" width="3.27" height="0.9" fill="#4ec9b0"/><rect x="16.89" y="39.54" width="0.55" height="0.9" fill="#d4d4d4"/><rect x="1.09" y="40.70" width="7.09" height="0.9" fill="#9cdcfe"/><rect x="8.18" y="40.70" width="0.55" height="0.9" fill="#d4d4d4"/><rect x="9.27" y="40.70" width="3.27" height="0.9" fill="#4ec9b0"/><rect x="12.54" y="40.70" width="0.55" height="0.9" fill="#d4d4d4"/><rect x="0.00" y="41.87" width="0.55" height="0.9" fill="#d4d4d4"/><rect x="0.00" y="44.19" width="3.27" height="0.9" fill="#c586c0"/><rect x="3.82" y="44.19" width="3.82" height="0.9" fill="#c586c0"/><rect x="8.18" y="44.19" width="2.73" height="0.9" fill="#569cd6"/><rect x="11.45" y="44.19" width="10.90" height="0.9" fill="#4ec9b0"/><rect x="22.89" y="44.19" width="3.82" height="0.9" fill="#569cd6"/><rect x="27.25" y="44.19" width="11.45" height="0.9" fill="#4ec9b0"/><rect x="38.70" y="44.19" width="0.55" height="0.9" fill="#d4d4d4"/><rect x="39.24" y="44.19" width="14.17" height="0.9" fill="#4ec9b0"/><rect x="53.41" y="44.19" width="1.64" height="0.9" fill="#d4d4d4"/><rect x="1.09" y="45.36" width="4.91" height="0.9" fill="#569cd6"/><rect x="6.54" y="45.36" width="3.27" height="0.9" fill="#dcdcaa"/><rect x="9.81" y="45.36" width="1.64" height="0.9" fill="#d4d4d4"/><rect x="11.99" y="45.36" width="3.82" height="0.9" fill="#4ec9b0"/><rect x="15.81" y="45.36" width="0.55" height="0.9" fill="#d4d4d4"/><rect x="16.35" y="45.36" width="2.18" height="0.9" fill="#569cd6"/><rect x="18.53" y="45.36" width="1.64" height="0.9" fill="#d4d4d4"/><rect x="2.18" y="46.52" width="9.27" height="0.9" fill="#4ec9b0"/><rect x="11.45" y="46.52" width="0.55" height="0.9" fill="#d4d4d4"/><rect x="11.99" y="46.52" width="3.82" height="0.9" fill="#9cdcfe"/><rect x="15.81" y="46.52" width="0.55" height="0.9" fill="#d4d4d4"/><rect x="16.35" y="46.52" width="27.25" height="0.9" fill="#ce9178"/><rect x="43.60" y="46.52" width="1.09" height="0.9" fill="#d4d4d4"/><rect x="2.18" y="47.68" width="9.27" height="0.9" fill="#4ec9b0"/><rect x="11.45" y="47.68" width="0.55" height="0.9" fill="#d4d4d4"/><rect x="11.99" y="47.68" width="3.82" height="0.9" fill="#9cdcfe"/><rect x="15.81" y="47.68" width="0.55" height="0.9" fill="#d4d4d4"/><rect x="16.35" y="47.68" width="45.65" height="0.9" fill="#ce9178"/><rect x="2.18" y="48.85" width="3.27" height="0.9" fill="#c586c0"/><rect x="6.00" y="48.85" width="2.73" height="0.9" fill="#569cd6"/><rect x="8.72" y="48.85" width="0.55" height="0.9" fill="#d4d4d4"/><rect x="9.27" y="48.85" width="3.27" height="0.9" fill="#9cdcfe"/><rect x="12.54" y="48.85" width="1.64" height="0.9" fill="#d4d4d4"/><rect x="1.09" y="50.01" width="0.55" height="0.9" fill="#d4d4d4"/><rect x="1.09" y="52.34" width="3.27" height="0.9" fill="#569cd6"/><rect x="4.91" y="52.34" width="3.27" height="0.9" fill="#9cdcfe"/><rect x="8.18" y="52.34" width="1.64" height="0.9" fill="#d4d4d4"/><rect x="10.36" y="52.34" width="2.18" height="0.9" fill="#569cd6"/><rect x="13.08" y="52.34" width="0.55" height="0.9" fill="#d4d4d4"/><rect x="2.18" y="53.50" width="2.18" height="0.9" fill="#569cd6"/><rect x="4.36" y="53.50" width="0.55" height="0.9" fill="#d4d4d4"/><rect x="4.91" y="53.50" width="5.45" height="0.9" fill="#9cdcfe"/><rect x="10.36" y="53.50" width="0.55" height="0.9" fill="#d4d4d4"/><rect x="10.90" y="53.50" width="4.91" height="0.9" fill="#9cdcfe"/><rect x="16.35" y="53.50" width="0.55" height="0.9" fill="#d4d4d4"/><rect x="17.44" y="53.50" width="0.55" height="0.9" fill="#ce9178"/><rect x="3.27" y="54.66" width="0.55" height="0.9" fill="#d4d4d4"/><rect x="3.82" y="54.66" width="1.64" height="0.9" fill="#9cdcfe"/><rect x="6.00" y="54.66" width="2.73" height="0.9" fill="#569cd6"/><rect x="8.72" y="54.66" width="0.55" height="0.9" fill="#d4d4d4"/><rect x="9.27" y="54.66" width="13.63" height="0.9" fill="#ce9178"/><rect x="22.89" y="54.66" width="0.55" height="0.9" fill="#d4d4d4"/><rect x="4.36" y="55.82" width="0.55" height="0.9" fill="#d4d4d4"/><rect x="4.91" y="55.82" width="1.64" height="0.9" fill="#9cdcfe"/><rect x="7.09" y="55.82" width="2.73" height="0.9" fill="#569cd6"/><rect x="9.81" y="55.82" width="0.55" height="0.9" fill="#d4d4d4"/><rect x="10.36" y="55.82" width="11.45" height="0.9" fill="#ce9178"/><rect x="21.80" y="55.82" width="0.55" height="0.9" fill="#d4d4d4"/><rect x="5.45" y="56.99" width="0.55" height="0.9" fill="#d4d4d4"/><rect x="6.00" y="56.99" width="1.64" height="0.9" fill="#9cdcfe"/><rect x="8.18" y="56.99" width="2.73" height="0.9" fill="#569cd6"/><rect x="10.90" y="56.99" width="0.55" height="0.9" fill="#d4d4d4"/><rect x="11.45" y="56.99" width="36.52" height="0.9" fill="#ce9178"/><rect x="47.96" y="56.99" width="0.55" height="0.9" fill="#d4d4d4"/><rect x="6.54" y="58.15" width="0.55" height="0.9" fill="#d4d4d4"/><rect x="7.09" y="58.15" width="1.64" height="0.9" fill="#9cdcfe"/><rect x="9.27" y="58.15" width="2.73" height="0.9" fill="#569cd6"/><rect x="11.99" y="58.15" width="0.55" height="0.9" fill="#d4d4d4"/><rect x="12.54" y="58.15" width="27.25" height="0.9" fill="#ce9178"/><rect x="39.79" y="58.15" width="0.55" height="0.9" fill="#d4d4d4"/><rect x="7.63" y="59.31" width="0.55" height="0.9" fill="#d4d4d4"/><rect x="8.18" y="59.31" width="2.18" height="0.9" fill="#9cdcfe"/><rect x="10.90" y="59.31" width="2.73" height="0.9" fill="#569cd6"/><rect x="13.63" y="59.31" width="0.55" height="0.9" fill="#d4d4d4"/><rect x="14.17" y="59.31" width="16.89" height="0.9" fill="#ce9178"/><rect x="31.07" y="59.31" width="0.55" height="0.9" fill="#d4d4d4"/><rect x="31.61" y="59.31" width="7.63" height="0.9" fill="#4ec9b0"/><rect x="39.24" y="59.31" width="1.09" height="0.9" fill="#d4d4d4"/><rect x="40.33" y="59.31" width="2.18" height="0.9" fill="#9cdcfe"/><rect x="42.51" y="59.31" width="0.55" height="0.9" fill="#d4d4d4"/><rect x="7.63" y="60.48" width="0.55" height="0.9" fill="#d4d4d4"/><rect x="8.18" y="60.48" width="3.27" height="0.9" fill="#9cdcfe"/><rect x="11.45" y="60.48" width="0.55" height="0.9" fill="#d4d4d4"/><rect x="11.99" y="60.48" width="9.27" height="0.9" fill="#ce9178"/><rect x="21.80" y="60.48" width="1.09" height="0.9" fill="#d4d4d4"/><rect x="6.54" y="61.64" width="1.09" height="0.9" fill="#d4d4d4"/><rect x="7.63" y="61.64" width="1.64" height="0.9" fill="#9cdcfe"/><rect x="9.27" y="61.64" width="0.55" height="0.9" fill="#d4d4d4"/><rect x="5.45" y="62.80" width="1.09" height="0.9" fill="#d4d4d4"/><rect x="6.54" y="62.80" width="1.64" height="0.9" fill="#9cdcfe"/><rect x="8.18" y="62.80" width="0.55" height="0.9" fill="#d4d4d4"/><rect x="4.36" y="63.97" width="1.09" height="0.9" fill="#d4d4d4"/><rect x="5.45" y="63.97" width="1.64" height="0.9" fill="#9cdcfe"/><rect x="7.09" y="63.97" width="0.55" height="0.9" fill="#d4d4d4"/><rect x="3.27" y="65.13" width="1.09" height="0.9" fill="#d4d4d4"/><rect x="4.36" y="65.13" width="1.64" height="0.9" fill="#9cdcfe"/><rect x="6.00" y="65.13" width="0.55" height="0.9" fill="#d4d4d4"/><rect x="6.54" y="65.13" width="1.09" height="0.9" fill="#ce9178"/><rect x="2.18" y="66.29" width="2.18" height="0.9" fill="#569cd6"/><rect x="4.36" y="66.29" width="0.55" height="0.9" fill="#d4d4d4"/><rect x="4.91" y="66.29" width="8.72" height="0.9" fill="#9cdcfe"/><rect x="13.63" y="66.29" width="1.64" height="0.9" fill="#d4d4d4"/><rect x="1.09" y="67.45" width="0.55" height="0.9" fill="#d4d4d4"/><rect x="1.09" y="69.78" width="3.82" height="0.9" fill="#569cd6"/><rect x="5.45" y="69.78" width="6.54" height="0.9" fill="#9cdcfe"/><rect x="11.99" y="69.78" width="1.64" height="0.9" fill="#d4d4d4"/><rect x="14.17" y="69.78" width="3.82" height="0.9" fill="#4ec9b0"/><rect x="17.99" y="69.78" width="0.55" height="0.9" fill="#d4d4d4"/><rect x="18.53" y="69.78" width="7.63" height="0.9" fill="#4ec9b0"/><rect x="26.16" y="69.78" width="1.64" height="0.9" fill="#d4d4d4"/><rect x="2.18" y="70.94" width="1.64" height="0.9" fill="#569cd6"/><rect x="4.36" y="70.94" width="1.64" height="0.9" fill="#9cdcfe"/><rect x="6.00" y="70.94" width="0.55" height="0.9" fill="#d4d4d4"/><rect x="7.09" y="70.94" width="3.27" height="0.9" fill="#569cd6"/><rect x="10.90" y="70.94" width="0.55" height="0.9" fill="#d4d4d4"/><rect x="11.99" y="70.94" width="2.18" height="0.9" fill="#569cd6"/><rect x="14.17" y="70.94" width="0.55" height="0.9" fill="#d4d4d4"/><rect x="14.72" y="70.94" width="3.82" height="0.9" fill="#9cdcfe"/><rect x="18.53" y="70.94" width="0.55" height="0.9" fill="#d4d4d4"/><rect x="19.08" y="70.94" width="6.00" height="0.9" fill="#9cdcfe"/><rect x="25.07" y="70.94" width="0.55" height="0.9" fill="#d4d4d4"/><rect x="25.62" y="70.94" width="1.64" height="0.9" fill="#9cdcfe"/><rect x="27.25" y="70.94" width="0.55" height="0.9" fill="#d4d4d4"/><rect x="27.80" y="70.94" width="6.00" height="0.9" fill="#9cdcfe"/><rect x="34.34" y="70.94" width="0.55" height="0.9" fill="#d4d4d4"/><rect x="35.43" y="70.94" width="17.44" height="0.9" fill="#ce9178"/><rect x="53.41" y="70.94" width="0.55" height="0.9" fill="#d4d4d4"/><rect x="54.50" y="70.94" width="2.18" height="0.9" fill="#569cd6"/><rect x="56.68" y="70.94" width="0.55" height="0.9" fill="#d4d4d4"/><rect x="57.23" y="70.94" width="4.77" height="0.9" fill="#9cdcfe"/><rect x="2.18" y="72.11" width="3.27" height="0.9" fill="#c586c0"/><rect x="6.00" y="72.11" width="2.18" height="0.9" fill="#569cd6"/><rect x="8.18" y="72.11" width="0.55" height="0.9" fill="#d4d4d4"/><rect x="8.72" y="72.11" width="3.82" height="0.9" fill="#9cdcfe"/><rect x="12.54" y="72.11" width="0.55" height="0.9" fill="#d4d4d4"/><rect x="13.08" y="72.11" width="6.54" height="0.9" fill="#9cdcfe"/><rect x="19.62" y="72.11" width="0.55" height="0.9" fill="#d4d4d4"/><rect x="20.17" y="72.11" width="1.64" height="0.9" fill="#569cd6"/><rect x="21.80" y="72.11" width="0.55" height="0.9" fill="#d4d4d4"/><rect x="22.35" y="72.11" width="1.64" height="0.9" fill="#9cdcfe"/><rect x="23.98" y="72.11" width="0.55" height="0.9" fill="#d4d4d4"/><rect x="25.07" y="72.11" width="6.54" height="0.9" fill="#4ec9b0"/><rect x="31.61" y="72.11" width="0.55" height="0.9" fill="#d4d4d4"/><rect x="32.16" y="72.11" width="7.63" height="0.9" fill="#9cdcfe"/><rect x="39.79" y="72.11" width="0.55" height="0.9" fill="#d4d4d4"/><rect x="40.33" y="72.11" width="1.09" height="0.9" fill="#9cdcfe"/><rect x="41.42" y="72.11" width="1.64" height="0.9" fill="#d4d4d4"/><rect x="3.27" y="73.27" width="3.82" height="0.9" fill="#9cdcfe"/><rect x="7.09" y="73.27" width="1.64" height="0.9" fill="#d4d4d4"/><rect x="9.27" y="73.27" width="8.18" height="0.9" fill="#ce9178"/><rect x="17.44" y="73.27" width="0.55" height="0.9" fill="#d4d4d4"/><rect x="18.53" y="73.27" width="2.73" height="0.9" fill="#ce9178"/><rect x="21.80" y="73.27" width="0.55" height="0.9" fill="#d4d4d4"/><rect x="2.18" y="74.43" width="1.09" height="0.9" fill="#d4d4d4"/><rect x="3.27" y="75.59" width="0.55" height="0.9" fill="#d4d4d4"/><rect x="3.82" y="75.59" width="2.18" height="0.9" fill="#9cdcfe"/><rect x="6.00" y="75.59" width="1.09" height="0.9" fill="#d4d4d4"/><rect x="7.09" y="75.59" width="4.36" height="0.9" fill="#9cdcfe"/><rect x="11.45" y="75.59" width="0.55" height="0.9" fill="#d4d4d4"/><rect x="12.54" y="75.59" width="10.90" height="0.9" fill="#4ec9b0"/><rect x="23.44" y="75.59" width="3.27" height="0.9" fill="#d4d4d4"/><rect x="4.36" y="76.76" width="3.27" height="0.9" fill="#c586c0"/><rect x="8.18" y="76.76" width="4.36" height="0.9" fill="#9cdcfe"/><rect x="12.54" y="76.76" width="0.55" height="0.9" fill="#d4d4d4"/><rect x="13.08" y="76.76" width="2.18" height="0.9" fill="#9cdcfe"/><rect x="15.26" y="76.76" width="1.64" height="0.9" fill="#d4d4d4"/><rect x="3.27" y="77.92" width="1.64" height="0.9" fill="#d4d4d4"/><rect x="1.09" y="79.08" width="0.55" height="0.9" fill="#d4d4d4"/><rect x="1.09" y="81.41" width="3.82" height="0.9" fill="#569cd6"/><rect x="5.45" y="81.41" width="8.72" height="0.9" fill="#9cdcfe"/><rect x="14.17" y="81.41" width="1.64" height="0.9" fill="#d4d4d4"/><rect x="16.35" y="81.41" width="2.18" height="0.9" fill="#569cd6"/><rect x="19.08" y="81.41" width="0.55" height="0.9" fill="#d4d4d4"/><rect x="2.18" y="82.57" width="1.09" height="0.9" fill="#c586c0"/><rect x="3.82" y="82.57" width="0.55" height="0.9" fill="#d4d4d4"/><rect x="4.36" y="82.57" width="6.00" height="0.9" fill="#4ec9b0"/><rect x="10.36" y="82.57" width="0.55" height="0.9" fill="#d4d4d4"/><rect x="10.90" y="82.57" width="2.18" height="0.9" fill="#9cdcfe"/><rect x="13.63" y="82.57" width="1.64" height="0.9" fill="#d4d4d4"/><rect x="15.81" y="82.57" width="8.18" height="0.9" fill="#4ec9b0"/><rect x="23.98" y="82.57" width="0.55" height="0.9" fill="#d4d4d4"/><rect x="24.53" y="82.57" width="2.73" height="0.9" fill="#4ec9b0"/><rect x="27.25" y="82.57" width="1.64" height="0.9" fill="#d4d4d4"/><rect x="3.27" y="83.74" width="2.18" height="0.9" fill="#569cd6"/><rect x="5.45" y="83.74" width="0.55" height="0.9" fill="#d4d4d4"/><rect x="6.00" y="83.74" width="8.72" height="0.9" fill="#9cdcfe"/><rect x="14.72" y="83.74" width="1.64" height="0.9" fill="#d4d4d4"/><rect x="16.35" y="83.74" width="2.18" height="0.9" fill="#9cdcfe"/><rect x="18.53" y="83.74" width="1.09" height="0.9" fill="#d4d4d4"/><rect x="19.62" y="83.74" width="4.36" height="0.9" fill="#9cdcfe"/><rect x="23.98" y="83.74" width="3.27" height="0.9" fill="#d4d4d4"/><rect x="4.36" y="84.90" width="2.18" height="0.9" fill="#569cd6"/><rect x="6.54" y="84.90" width="0.55" height="0.9" fill="#d4d4d4"/><rect x="7.09" y="84.90" width="6.00" height="0.9" fill="#9cdcfe"/><rect x="13.08" y="84.90" width="0.55" height="0.9" fill="#d4d4d4"/><rect x="13.63" y="84.90" width="4.36" height="0.9" fill="#9cdcfe"/><rect x="17.99" y="84.90" width="0.55" height="0.9" fill="#d4d4d4"/><rect x="18.53" y="84.90" width="2.73" height="0.9" fill="#9cdcfe"/><rect x="21.26" y="84.90" width="1.09" height="0.9" fill="#d4d4d4"/><rect x="3.27" y="86.06" width="1.64" height="0.9" fill="#d4d4d4"/><rect x="2.18" y="87.23" width="0.55" height="0.9" fill="#d4d4d4"/><rect x="2.18" y="88.39" width="3.82" height="0.9" fill="#c586c0"/><rect x="6.54" y="88.39" width="0.55" height="0.9" fill="#d4d4d4"/><rect x="7.09" y="88.39" width="6.00" height="0.9" fill="#4ec9b0"/><rect x="13.08" y="88.39" width="0.55" height="0.9" fill="#d4d4d4"/><rect x="13.63" y="88.39" width="2.18" height="0.9" fill="#9cdcfe"/><rect x="16.35" y="88.39" width="1.09" height="0.9" fill="#d4d4d4"/><rect x="17.99" y="88.39" width="8.18" height="0.9" fill="#4ec9b0"/><rect x="26.16" y="88.39" width="0.55" height="0.9" fill="#d4d4d4"/><rect x="26.71" y="88.39" width="5.45" height="0.9" fill="#4ec9b0"/><rect x="32.70" y="88.39" width="1.09" height="0.9" fill="#d4d4d4"/><rect x="3.27" y="89.55" width="6.00" height="0.9" fill="#4ec9b0"/><rect x="9.27" y="89.55" width="0.55" height="0.9" fill="#d4d4d4"/><rect x="9.81" y="89.55" width="2.18" height="0.9" fill="#9cdcfe"/><rect x="12.54" y="89.55" width="1.09" height="0.9" fill="#d4d4d4"/><rect x="14.17" y="89.55" width="8.18" height="0.9" fill="#4ec9b0"/><rect x="22.35" y="89.55" width="0.55" height="0.9" fill="#d4d4d4"/><rect x="22.89" y="89.55" width="9.27" height="0.9" fill="#4ec9b0"/><rect x="32.16" y="89.55" width="1.64" height="0.9" fill="#d4d4d4"/><rect x="3.27" y="90.71" width="2.18" height="0.9" fill="#569cd6"/><rect x="5.45" y="90.71" width="0.55" height="0.9" fill="#d4d4d4"/><rect x="6.00" y="90.71" width="6.54" height="0.9" fill="#9cdcfe"/><rect x="12.54" y="90.71" width="1.09" height="0.9" fill="#d4d4d4"/><rect x="4.36" y="91.88" width="0.55" height="0.9" fill="#d4d4d4"/><rect x="4.91" y="91.88" width="2.18" height="0.9" fill="#9cdcfe"/><rect x="7.09" y="91.88" width="1.09" height="0.9" fill="#d4d4d4"/><rect x="8.18" y="91.88" width="4.36" height="0.9" fill="#9cdcfe"/><rect x="12.54" y="91.88" width="3.27" height="0.9" fill="#d4d4d4"/><rect x="5.45" y="93.04" width="2.18" height="0.9" fill="#569cd6"/><rect x="7.63" y="93.04" width="0.55" height="0.9" fill="#d4d4d4"/><rect x="8.18" y="93.04" width="6.00" height="0.9" fill="#9cdcfe"/><rect x="14.17" y="93.04" width="0.55" height="0.9" fill="#d4d4d4"/><rect x="14.72" y="93.04" width="4.36" height="0.9" fill="#9cdcfe"/><rect x="19.08" y="93.04" width="0.55" height="0.9" fill="#d4d4d4"/><rect x="19.62" y="93.04" width="9.81" height="0.9" fill="#4ec9b0"/><rect x="29.43" y="93.04" width="0.55" height="0.9" fill="#d4d4d4"/><rect x="29.98" y="93.04" width="8.18" height="0.9" fill="#4ec9b0"/><rect x="38.15" y="93.04" width="0.55" height="0.9" fill="#d4d4d4"/><rect x="38.70" y="93.04" width="2.73" height="0.9" fill="#4ec9b0"/><rect x="41.42" y="93.04" width="0.55" height="0.9" fill="#d4d4d4"/><rect x="41.97" y="93.04" width="2.18" height="0.9" fill="#4ec9b0"/><rect x="44.15" y="93.04" width="1.09" height="0.9" fill="#d4d4d4"/><rect x="4.36" y="94.20" width="1.64" height="0.9" fill="#d4d4d4"/><rect x="2.18" y="95.37" width="0.55" height="0.9" fill="#d4d4d4"/><rect x="1.09" y="96.53" width="0.55" height="0.9" fill="#d4d4d4"/><rect x="1.09" y="98.86" width="3.82" height="0.9" fill="#569cd6"/><rect x="5.45" y="98.86" width="6.00" height="0.9" fill="#9cdcfe"/><rect x="11.45" y="98.86" width="0.55" height="0.9" fill="#d4d4d4"/><rect x="11.99" y="98.86" width="2.73" height="0.9" fill="#9cdcfe"/><rect x="14.72" y="98.86" width="0.55" height="0.9" fill="#d4d4d4"/><rect x="15.81" y="98.86" width="8.72" height="0.9" fill="#4ec9b0"/><rect x="24.53" y="98.86" width="2.18" height="0.9" fill="#d4d4d4"/><rect x="27.25" y="98.86" width="2.18" height="0.9" fill="#569cd6"/><rect x="29.98" y="98.86" width="0.55" height="0.9" fill="#d4d4d4"/><rect x="2.18" y="100.02" width="1.64" height="0.9" fill="#569cd6"/><rect x="4.36" y="100.02" width="2.18" height="0.9" fill="#9cdcfe"/><rect x="6.54" y="100.02" width="0.55" height="0.9" fill="#d4d4d4"/><rect x="7.63" y="100.02" width="3.27" height="0.9" fill="#569cd6"/><rect x="11.45" y="100.02" width="0.55" height="0.9" fill="#d4d4d4"/><rect x="12.54" y="100.02" width="1.09" height="0.9" fill="#ce9178"/><rect x="13.63" y="100.02" width="0.55" height="0.9" fill="#d4d4d4"/><rect x="2.18" y="101.18" width="2.73" height="0.9" fill="#9cdcfe"/><rect x="4.91" y="101.18" width="0.55" height="0.9" fill="#d4d4d4"/><rect x="5.45" y="101.18" width="3.82" height="0.9" fill="#9cdcfe"/><rect x="9.27" y="101.18" width="1.09" height="0.9" fill="#d4d4d4"/><rect x="10.36" y="101.18" width="2.18" height="0.9" fill="#9cdcfe"/><rect x="12.54" y="101.18" width="0.55" height="0.9" fill="#d4d4d4"/><rect x="13.63" y="101.18" width="8.72" height="0.9" fill="#4ec9b0"/><rect x="22.35" y="101.18" width="3.27" height="0.9" fill="#d4d4d4"/><rect x="3.27" y="102.34" width="2.18" height="0.9" fill="#9cdcfe"/><rect x="6.00" y="102.34" width="1.09" height="0.9" fill="#d4d4d4"/><rect x="7.63" y="102.34" width="0.55" height="0.9" fill="#ce9178"/><rect x="4.36" y="103.51" width="0.55" height="0.9" fill="#d4d4d4"/><rect x="4.91" y="103.51" width="1.09" height="0.9" fill="#9cdcfe"/><rect x="6.54" y="103.51" width="2.73" height="0.9" fill="#569cd6"/><rect x="9.27" y="103.51" width="0.55" height="0.9" fill="#d4d4d4"/><rect x="9.81" y="103.51" width="8.72" height="0.9" fill="#ce9178"/><rect x="18.53" y="103.51" width="0.55" height="0.9" fill="#d4d4d4"/><rect x="5.45" y="104.67" width="0.55" height="0.9" fill="#d4d4d4"/><rect x="6.00" y="104.67" width="1.09" height="0.9" fill="#9cdcfe"/><rect x="7.63" y="104.67" width="2.73" height="0.9" fill="#569cd6"/><rect x="10.36" y="104.67" width="0.55" height="0.9" fill="#d4d4d4"/><rect x="10.90" y="104.67" width="10.90" height="0.9" fill="#ce9178"/><rect x="21.80" y="104.67" width="0.55" height="0.9" fill="#d4d4d4"/><rect x="6.54" y="105.83" width="0.55" height="0.9" fill="#d4d4d4"/><rect x="7.09" y="105.83" width="2.18" height="0.9" fill="#9cdcfe"/><rect x="9.81" y="105.83" width="2.73" height="0.9" fill="#569cd6"/><rect x="12.54" y="105.83" width="0.55" height="0.9" fill="#d4d4d4"/><rect x="13.08" y="105.83" width="6.00" height="0.9" fill="#ce9178"/><rect x="19.08" y="105.83" width="0.55" height="0.9" fill="#d4d4d4"/><rect x="19.62" y="105.83" width="0.55" height="0.9" fill="#9cdcfe"/><rect x="20.17" y="105.83" width="0.55" height="0.9" fill="#d4d4d4"/><rect x="20.71" y="105.83" width="2.18" height="0.9" fill="#9cdcfe"/><rect x="22.89" y="105.83" width="0.55" height="0.9" fill="#d4d4d4"/><rect x="23.44" y="105.83" width="2.73" height="0.9" fill="#4ec9b0"/><rect x="26.16" y="105.83" width="1.64" height="0.9" fill="#d4d4d4"/><rect x="27.80" y="105.83" width="2.18" height="0.9" fill="#9cdcfe"/><rect x="29.98" y="105.83" width="0.55" height="0.9" fill="#d4d4d4"/><rect x="5.45" y="107.00" width="1.09" height="0.9" fill="#d4d4d4"/><rect x="6.54" y="107.00" width="1.09" height="0.9" fill="#9cdcfe"/><rect x="7.63" y="107.00" width="0.55" height="0.9" fill="#d4d4d4"/><rect x="4.36" y="108.16" width="1.09" height="0.9" fill="#d4d4d4"/><rect x="5.45" y="108.16" width="1.09" height="0.9" fill="#9cdcfe"/><rect x="6.54" y="108.16" width="0.55" height="0.9" fill="#d4d4d4"/><rect x="7.09" y="108.16" width="1.09" height="0.9" fill="#ce9178"/><rect x="2.18" y="109.32" width="1.64" height="0.9" fill="#d4d4d4"/><rect x="2.18" y="110.48" width="2.73" height="0.9" fill="#569cd6"/><rect x="5.45" y="110.48" width="7.09" height="0.9" fill="#9cdcfe"/><rect x="12.54" y="110.48" width="0.55" height="0.9" fill="#d4d4d4"/><rect x="13.63" y="110.48" width="3.82" height="0.9" fill="#4ec9b0"/><rect x="17.99" y="110.48" width="0.55" height="0.9" fill="#d4d4d4"/><rect x="19.08" y="110.48" width="2.18" height="0.9" fill="#569cd6"/><rect x="21.26" y="110.48" width="0.55" height="0.9" fill="#d4d4d4"/><rect x="21.80" y="110.48" width="5.45" height="0.9" fill="#9cdcfe"/><rect x="27.25" y="110.48" width="0.55" height="0.9" fill="#d4d4d4"/><rect x="27.80" y="110.48" width="7.09" height="0.9" fill="#9cdcfe"/><rect x="34.88" y="110.48" width="0.55" height="0.9" fill="#d4d4d4"/><rect x="35.43" y="110.48" width="9.81" height="0.9" fill="#ce9178"/><rect x="45.24" y="110.48" width="1.09" height="0.9" fill="#d4d4d4"/><rect x="2.18" y="111.65" width="7.09" height="0.9" fill="#9cdcfe"/><rect x="9.27" y="111.65" width="0.55" height="0.9" fill="#d4d4d4"/><rect x="9.81" y="111.65" width="4.91" height="0.9" fill="#9cdcfe"/><rect x="15.26" y="111.65" width="0.55" height="0.9" fill="#d4d4d4"/><rect x="16.35" y="111.65" width="2.18" height="0.9" fill="#9cdcfe"/><rect x="18.53" y="111.65" width="0.55" height="0.9" fill="#d4d4d4"/><rect x="1.09" y="112.81" width="0.55" height="0.9" fill="#d4d4d4"/><rect x="1.09" y="115.14" width="3.82" height="0.9" fill="#569cd6"/><rect x="5.45" y="115.14" width="8.72" height="0.9" fill="#9cdcfe"/><rect x="14.17" y="115.14" width="1.64" height="0.9" fill="#d4d4d4"/><rect x="16.35" y="115.14" width="3.82" height="0.9" fill="#4ec9b0"/><rect x="20.17" y="115.14" width="0.55" height="0.9" fill="#d4d4d4"/><rect x="20.71" y="115.14" width="7.63" height="0.9" fill="#4ec9b0"/><rect x="28.34" y="115.14" width="1.64" height="0.9" fill="#d4d4d4"/><rect x="2.18" y="116.30" width="3.27" height="0.9" fill="#c586c0"/><rect x="6.00" y="116.30" width="7.63" height="0.9" fill="#4ec9b0"/><rect x="13.63" y="116.30" width="0.55" height="0.9" fill="#d4d4d4"/><rect x="14.17" y="116.30" width="1.64" height="0.9" fill="#569cd6"/><rect x="15.81" y="116.30" width="1.09" height="0.9" fill="#d4d4d4"/><rect x="3.27" y="117.46" width="0.55" height="0.9" fill="#d4d4d4"/><rect x="3.82" y="117.46" width="2.18" height="0.9" fill="#9cdcfe"/><rect x="6.00" y="117.46" width="1.09" height="0.9" fill="#d4d4d4"/><rect x="7.09" y="117.46" width="2.18" height="0.9" fill="#9cdcfe"/><rect x="9.27" y="117.46" width="0.55" height="0.9" fill="#d4d4d4"/><rect x="10.36" y="117.46" width="7.09" height="0.9" fill="#4ec9b0"/><rect x="17.44" y="117.46" width="4.36" height="0.9" fill="#d4d4d4"/><rect x="4.36" y="118.63" width="1.64" height="0.9" fill="#569cd6"/><rect x="6.54" y="118.63" width="4.36" height="0.9" fill="#9cdcfe"/><rect x="10.90" y="118.63" width="0.55" height="0.9" fill="#d4d4d4"/><rect x="11.99" y="118.63" width="7.63" height="0.9" fill="#4ec9b0"/><rect x="20.17" y="118.63" width="1.64" height="0.9" fill="#d4d4d4"/><rect x="22.35" y="118.63" width="2.73" height="0.9" fill="#9cdcfe"/><rect x="25.07" y="118.63" width="0.55" height="0.9" fill="#d4d4d4"/><rect x="26.16" y="118.63" width="2.18" height="0.9" fill="#9cdcfe"/><rect x="28.89" y="118.63" width="1.09" height="0.9" fill="#d4d4d4"/><rect x="4.36" y="119.79" width="3.27" height="0.9" fill="#c586c0"/><rect x="8.18" y="119.79" width="4.36" height="0.9" fill="#9cdcfe"/><rect x="12.54" y="119.79" width="0.55" height="0.9" fill="#d4d4d4"/><rect x="3.27" y="120.95" width="1.09" height="0.9" fill="#d4d4d4"/><rect x="4.91" y="120.95" width="1.09" height="0.9" fill="#c586c0"/><rect x="6.54" y="120.95" width="3.82" height="0.9" fill="#4ec9b0"/><rect x="10.36" y="120.95" width="0.55" height="0.9" fill="#d4d4d4"/><rect x="10.90" y="120.95" width="7.63" height="0.9" fill="#4ec9b0"/><rect x="18.53" y="120.95" width="1.09" height="0.9" fill="#d4d4d4"/><rect x="1.09" y="122.12" width="0.55" height="0.9" fill="#d4d4d4"/><rect x="1.09" y="124.44" width="3.82" height="0.9" fill="#569cd6"/><rect x="5.45" y="124.44" width="6.54" height="0.9" fill="#9cdcfe"/><rect x="11.99" y="124.44" width="0.55" height="0.9" fill="#d4d4d4"/><rect x="12.54" y="124.44" width="2.73" height="0.9" fill="#9cdcfe"/><rect x="15.26" y="124.44" width="0.55" height="0.9" fill="#d4d4d4"/><rect x="16.35" y="124.44" width="3.27" height="0.9" fill="#569cd6"/><rect x="19.62" y="124.44" width="1.09" height="0.9" fill="#d4d4d4"/><rect x="21.26" y="124.44" width="3.82" height="0.9" fill="#4ec9b0"/><rect x="25.07" y="124.44" width="0.55" height="0.9" fill="#d4d4d4"/><rect x="25.62" y="124.44" width="7.63" height="0.9" fill="#4ec9b0"/><rect x="33.25" y="124.44" width="1.64" height="0.9" fill="#d4d4d4"/><rect x="2.18" y="125.60" width="2.73" height="0.9" fill="#569cd6"/><rect x="5.45" y="125.60" width="1.64" height="0.9" fill="#9cdcfe"/><rect x="7.63" y="125.60" width="0.55" height="0.9" fill="#d4d4d4"/><rect x="8.72" y="125.60" width="53.28" height="0.9" fill="#ce9178"/><rect x="2.18" y="126.77" width="3.27" height="0.9" fill="#c586c0"/><rect x="6.00" y="126.77" width="2.18" height="0.9" fill="#569cd6"/><rect x="8.18" y="126.77" width="0.55" height="0.9" fill="#d4d4d4"/><rect x="8.72" y="126.77" width="3.82" height="0.9" fill="#9cdcfe"/><rect x="12.54" y="126.77" width="0.55" height="0.9" fill="#d4d4d4"/><rect x="13.08" y="126.77" width="6.54" height="0.9" fill="#9cdcfe"/><rect x="19.62" y="126.77" width="0.55" height="0.9" fill="#d4d4d4"/><rect x="20.17" y="126.77" width="1.64" height="0.9" fill="#569cd6"/><rect x="21.80" y="126.77" width="0.55" height="0.9" fill="#d4d4d4"/><rect x="22.35" y="126.77" width="1.64" height="0.9" fill="#9cdcfe"/><rect x="23.98" y="126.77" width="0.55" height="0.9" fill="#d4d4d4"/><rect x="25.07" y="126.77" width="6.54" height="0.9" fill="#4ec9b0"/><rect x="31.61" y="126.77" width="0.55" height="0.9" fill="#d4d4d4"/><rect x="32.16" y="126.77" width="7.63" height="0.9" fill="#9cdcfe"/><rect x="39.79" y="126.77" width="0.55" height="0.9" fill="#d4d4d4"/><rect x="40.33" y="126.77" width="1.09" height="0.9" fill="#9cdcfe"/><rect x="41.42" y="126.77" width="1.64" height="0.9" fill="#d4d4d4"/><rect x="3.27" y="127.93" width="3.82" height="0.9" fill="#9cdcfe"/><rect x="7.09" y="127.93" width="1.64" height="0.9" fill="#d4d4d4"/><rect x="4.36" y="129.09" width="4.36" height="0.9" fill="#ce9178"/><rect x="8.72" y="129.09" width="0.55" height="0.9" fill="#d4d4d4"/><rect x="9.81" y="129.09" width="19.08" height="0.9" fill="#ce9178"/><rect x="28.89" y="129.09" width="0.55" height="0.9" fill="#d4d4d4"/><rect x="4.36" y="130.26" width="8.18" height="0.9" fill="#ce9178"/><rect x="12.54" y="130.26" width="0.55" height="0.9" fill="#d4d4d4"/><rect x="13.63" y="130.26" width="1.09" height="0.9" fill="#ce9178"/><rect x="3.27" y="131.42" width="0.55" height="0.9" fill="#d4d4d4"/><rect x="2.18" y="132.58" width="1.64" height="0.9" fill="#d4d4d4"/><rect x="3.82" y="132.58" width="2.18" height="0.9" fill="#9cdcfe"/><rect x="6.00" y="132.58" width="1.09" height="0.9" fill="#d4d4d4"/><rect x="7.09" y="132.58" width="1.64" height="0.9" fill="#9cdcfe"/><rect x="8.72" y="132.58" width="0.55" height="0.9" fill="#d4d4d4"/><rect x="9.81" y="132.58" width="10.90" height="0.9" fill="#4ec9b0"/><rect x="20.71" y="132.58" width="3.27" height="0.9" fill="#d4d4d4"/><rect x="3.27" y="133.75" width="3.27" height="0.9" fill="#c586c0"/><rect x="7.09" y="133.75" width="1.64" height="0.9" fill="#9cdcfe"/><rect x="8.72" y="133.75" width="0.55" height="0.9" fill="#d4d4d4"/><rect x="9.27" y="133.75" width="2.18" height="0.9" fill="#9cdcfe"/><rect x="11.45" y="133.75" width="1.64" height="0.9" fill="#d4d4d4"/><rect x="2.18" y="134.91" width="1.64" height="0.9" fill="#d4d4d4"/><rect x="1.09" y="136.07" width="0.55" height="0.9" fill="#d4d4d4"/><rect x="1.09" y="138.40" width="3.82" height="0.9" fill="#569cd6"/><rect x="5.45" y="138.40" width="4.91" height="0.9" fill="#9cdcfe"/><rect x="10.36" y="138.40" width="1.64" height="0.9" fill="#d4d4d4"/><rect x="12.54" y="138.40" width="2.18" height="0.9" fill="#569cd6"/><rect x="15.26" y="138.40" width="0.55" height="0.9" fill="#d4d4d4"/><rect x="2.18" y="139.56" width="2.73" height="0.9" fill="#569cd6"/><rect x="5.45" y="139.56" width="2.73" height="0.9" fill="#9cdcfe"/><rect x="8.72" y="139.56" width="0.55" height="0.9" fill="#d4d4d4"/><rect x="9.81" y="139.56" width="2.18" height="0.9" fill="#569cd6"/><rect x="11.99" y="139.56" width="0.55" height="0.9" fill="#d4d4d4"/><rect x="12.54" y="139.56" width="5.45" height="0.9" fill="#9cdcfe"/><rect x="17.99" y="139.56" width="0.55" height="0.9" fill="#d4d4d4"/><rect x="18.53" y="139.56" width="7.09" height="0.9" fill="#9cdcfe"/><rect x="25.62" y="139.56" width="0.55" height="0.9" fill="#d4d4d4"/><rect x="26.16" y="139.56" width="6.54" height="0.9" fill="#ce9178"/><rect x="32.70" y="139.56" width="0.55" height="0.9" fill="#d4d4d4"/><rect x="33.79" y="139.56" width="1.09" height="0.9" fill="#c586c0"/><rect x="35.43" y="139.56" width="8.72" height="0.9" fill="#4ec9b0"/><rect x="44.15" y="139.56" width="0.55" height="0.9" fill="#d4d4d4"/><rect x="2.18" y="140.72" width="2.18" height="0.9" fill="#569cd6"/><rect x="4.36" y="140.72" width="0.55" height="0.9" fill="#d4d4d4"/><rect x="4.91" y="140.72" width="6.54" height="0.9" fill="#9cdcfe"/><rect x="11.45" y="140.72" width="0.55" height="0.9" fill="#d4d4d4"/><rect x="11.99" y="140.72" width="2.73" height="0.9" fill="#9cdcfe"/><rect x="14.72" y="140.72" width="0.55" height="0.9" fill="#d4d4d4"/><rect x="15.26" y="140.72" width="2.73" height="0.9" fill="#9cdcfe"/><rect x="17.99" y="140.72" width="1.09" height="0.9" fill="#d4d4d4"/><rect x="19.08" y="140.72" width="2.18" height="0.9" fill="#9cdcfe"/><rect x="21.26" y="140.72" width="1.09" height="0.9" fill="#d4d4d4"/><rect x="22.35" y="140.72" width="3.82" height="0.9" fill="#9cdcfe"/><rect x="26.16" y="140.72" width="3.27" height="0.9" fill="#d4d4d4"/><rect x="3.27" y="141.89" width="2.18" height="0.9" fill="#569cd6"/><rect x="5.45" y="141.89" width="0.55" height="0.9" fill="#d4d4d4"/><rect x="6.00" y="141.89" width="6.00" height="0.9" fill="#9cdcfe"/><rect x="11.99" y="141.89" width="0.55" height="0.9" fill="#d4d4d4"/><rect x="12.54" y="141.89" width="3.82" height="0.9" fill="#9cdcfe"/><rect x="16.35" y="141.89" width="0.55" height="0.9" fill="#d4d4d4"/><rect x="16.89" y="141.89" width="9.81" height="0.9" fill="#4ec9b0"/><rect x="26.71" y="141.89" width="0.55" height="0.9" fill="#d4d4d4"/><rect x="27.25" y="141.89" width="8.18" height="0.9" fill="#4ec9b0"/><rect x="35.43" y="141.89" width="0.55" height="0.9" fill="#d4d4d4"/><rect x="35.97" y="141.89" width="2.73" height="0.9" fill="#4ec9b0"/><rect x="38.70" y="141.89" width="0.55" height="0.9" fill="#d4d4d4"/><rect x="39.24" y="141.89" width="2.18" height="0.9" fill="#4ec9b0"/><rect x="41.42" y="141.89" width="1.09" height="0.9" fill="#d4d4d4"/><rect x="2.18" y="143.05" width="1.64" height="0.9" fill="#d4d4d4"/><rect x="1.09" y="144.21" width="0.55" height="0.9" fill="#d4d4d4"/><rect x="1.09" y="146.54" width="3.82" height="0.9" fill="#569cd6"/><rect x="5.45" y="146.54" width="6.00" height="0.9" fill="#9cdcfe"/><rect x="11.45" y="146.54" width="0.55" height="0.9" fill="#d4d4d4"/><rect x="11.99" y="146.54" width="2.18" height="0.9" fill="#9cdcfe"/><rect x="14.17" y="146.54" width="0.55" height="0.9" fill="#d4d4d4"/><rect x="15.26" y="146.54" width="8.72" height="0.9" fill="#4ec9b0"/><rect x="23.98" y="146.54" width="2.18" height="0.9" fill="#d4d4d4"/><rect x="26.71" y="146.54" width="3.27" height="0.9" fill="#569cd6"/><rect x="30.52" y="146.54" width="0.55" height="0.9" fill="#d4d4d4"/><rect x="2.18" y="147.70" width="1.64" height="0.9" fill="#569cd6"/><rect x="4.36" y="147.70" width="2.18" height="0.9" fill="#9cdcfe"/><rect x="7.09" y="147.70" width="0.55" height="0.9" fill="#d4d4d4"/><rect x="8.18" y="147.70" width="14.17" height="0.9" fill="#ce9178"/><rect x="22.35" y="147.70" width="0.55" height="0.9" fill="#d4d4d4"/><rect x="2.18" y="148.86" width="2.18" height="0.9" fill="#9cdcfe"/><rect x="4.36" y="148.86" width="0.55" height="0.9" fill="#d4d4d4"/><rect x="4.91" y="148.86" width="3.82" height="0.9" fill="#9cdcfe"/><rect x="8.72" y="148.86" width="1.09" height="0.9" fill="#d4d4d4"/><rect x="9.81" y="148.86" width="1.64" height="0.9" fill="#9cdcfe"/><rect x="11.45" y="148.86" width="3.27" height="0.9" fill="#d4d4d4"/><rect x="3.27" y="150.03" width="2.18" height="0.9" fill="#9cdcfe"/><rect x="6.00" y="150.03" width="1.09" height="0.9" fill="#d4d4d4"/><rect x="7.63" y="150.03" width="3.27" height="0.9" fill="#ce9178"/><rect x="10.90" y="150.03" width="0.55" height="0.9" fill="#d4d4d4"/><rect x="3.27" y="151.19" width="2.18" height="0.9" fill="#9cdcfe"/><rect x="6.00" y="151.19" width="1.09" height="0.9" fill="#d4d4d4"/><rect x="7.63" y="151.19" width="16.89" height="0.9" fill="#ce9178"/><rect x="24.53" y="151.19" width="0.55" height="0.9" fill="#d4d4d4"/><rect x="3.27" y="152.35" width="2.18" height="0.9" fill="#9cdcfe"/><rect x="6.00" y="152.35" width="1.09" height="0.9" fill="#d4d4d4"/><rect x="7.63" y="152.35" width="16.35" height="0.9" fill="#ce9178"/><rect x="23.98" y="152.35" width="0.55" height="0.9" fill="#d4d4d4"/><rect x="3.27" y="153.52" width="2.18" height="0.9" fill="#9cdcfe"/><rect x="6.00" y="153.52" width="1.09" height="0.9" fill="#d4d4d4"/><rect x="7.63" y="153.52" width="18.53" height="0.9" fill="#ce9178"/><rect x="26.16" y="153.52" width="0.55" height="0.9" fill="#d4d4d4"/><rect x="3.27" y="154.68" width="2.18" height="0.9" fill="#9cdcfe"/><rect x="6.00" y="154.68" width="1.09" height="0.9" fill="#d4d4d4"/><rect x="7.63" y="154.68" width="3.82" height="0.9" fill="#ce9178"/><rect x="11.45" y="154.68" width="0.55" height="0.9" fill="#d4d4d4"/><rect x="2.18" y="155.84" width="1.64" height="0.9" fill="#d4d4d4"/><rect x="2.18" y="157.00" width="2.18" height="0.9" fill="#9cdcfe"/><rect x="4.91" y="157.00" width="1.09" height="0.9" fill="#d4d4d4"/><rect x="6.54" y="157.00" width="5.45" height="0.9" fill="#ce9178"/><rect x="11.99" y="157.00" width="0.55" height="0.9" fill="#d4d4d4"/><rect x="2.18" y="158.17" width="3.27" height="0.9" fill="#c586c0"/><rect x="6.00" y="158.17" width="2.18" height="0.9" fill="#9cdcfe"/><rect x="8.18" y="158.17" width="0.55" height="0.9" fill="#d4d4d4"/><rect x="1.09" y="159.33" width="0.55" height="0.9" fill="#d4d4d4"/><rect x="1.09" y="161.66" width="3.82" height="0.9" fill="#569cd6"/><rect x="5.45" y="161.66" width="6.00" height="0.9" fill="#9cdcfe"/><rect x="11.45" y="161.66" width="0.55" height="0.9" fill="#d4d4d4"/><rect x="11.99" y="161.66" width="2.73" height="0.9" fill="#9cdcfe"/><rect x="14.72" y="161.66" width="0.55" height="0.9" fill="#d4d4d4"/><rect x="15.81" y="161.66" width="3.27" height="0.9" fill="#569cd6"/><rect x="19.08" y="161.66" width="1.09" height="0.9" fill="#d4d4d4"/><rect x="20.71" y="161.66" width="3.27" height="0.9" fill="#569cd6"/><rect x="24.53" y="161.66" width="0.55" height="0.9" fill="#d4d4d4"/><rect x="2.18" y="162.82" width="2.73" height="0.9" fill="#569cd6"/><rect x="5.45" y="162.82" width="0.55" height="0.9" fill="#9cdcfe"/><rect x="6.54" y="162.82" width="0.55" height="0.9" fill="#d4d4d4"/><rect x="7.63" y="162.82" width="1.64" height="0.9" fill="#c586c0"/><rect x="9.81" y="162.82" width="2.18" height="0.9" fill="#4ec9b0"/><rect x="11.99" y="162.82" width="0.55" height="0.9" fill="#d4d4d4"/><rect x="12.54" y="162.82" width="2.73" height="0.9" fill="#9cdcfe"/><rect x="15.26" y="162.82" width="1.09" height="0.9" fill="#d4d4d4"/><rect x="2.18" y="163.98" width="3.27" height="0.9" fill="#c586c0"/><rect x="6.00" y="163.98" width="0.55" height="0.9" fill="#9cdcfe"/><rect x="6.54" y="163.98" width="0.55" height="0.9" fill="#d4d4d4"/><rect x="7.09" y="163.98" width="9.81" height="0.9" fill="#9cdcfe"/><rect x="16.89" y="163.98" width="1.64" height="0.9" fill="#d4d4d4"/><rect x="1.09" y="165.15" width="0.55" height="0.9" fill="#d4d4d4"/><rect x="1.09" y="167.47" width="3.82" height="0.9" fill="#569cd6"/><rect x="5.45" y="167.47" width="3.82" height="0.9" fill="#9cdcfe"/><rect x="9.27" y="167.47" width="0.55" height="0.9" fill="#d4d4d4"/><rect x="9.81" y="167.47" width="2.73" height="0.9" fill="#9cdcfe"/><rect x="12.54" y="167.47" width="0.55" height="0.9" fill="#d4d4d4"/><rect x="13.63" y="167.47" width="1.64" height="0.9" fill="#569cd6"/><rect x="15.26" y="167.47" width="2.18" height="0.9" fill="#d4d4d4"/><rect x="17.99" y="167.47" width="8.72" height="0.9" fill="#4ec9b0"/><rect x="27.25" y="167.47" width="0.55" height="0.9" fill="#d4d4d4"/><rect x="2.18" y="168.63" width="2.73" height="0.9" fill="#569cd6"/><rect x="5.45" y="168.63" width="1.64" height="0.9" fill="#9cdcfe"/><rect x="7.09" y="168.63" width="0.55" height="0.9" fill="#d4d4d4"/><rect x="8.18" y="168.63" width="1.64" height="0.9" fill="#569cd6"/><rect x="10.36" y="168.63" width="2.73" height="0.9" fill="#d4d4d4"/><rect x="2.18" y="169.80" width="2.73" height="0.9" fill="#9cdcfe"/><rect x="4.91" y="169.80" width="0.55" height="0.9" fill="#d4d4d4"/><rect x="5.45" y="169.80" width="3.82" height="0.9" fill="#9cdcfe"/><rect x="9.27" y="169.80" width="1.09" height="0.9" fill="#d4d4d4"/><rect x="10.36" y="169.80" width="2.18" height="0.9" fill="#9cdcfe"/><rect x="12.54" y="169.80" width="3.27" height="0.9" fill="#d4d4d4"/><rect x="3.27" y="170.96" width="1.64" height="0.9" fill="#9cdcfe"/><rect x="4.91" y="170.96" width="0.55" height="0.9" fill="#d4d4d4"/><rect x="5.45" y="170.96" width="2.18" height="0.9" fill="#9cdcfe"/><rect x="7.63" y="170.96" width="0.55" height="0.9" fill="#d4d4d4"/><rect x="8.18" y="170.96" width="1.64" height="0.9" fill="#4ec9b0"/><rect x="9.81" y="170.96" width="1.64" height="0.9" fill="#d4d4d4"/><rect x="11.99" y="170.96" width="2.18" height="0.9" fill="#9cdcfe"/><rect x="14.17" y="170.96" width="0.55" height="0.9" fill="#d4d4d4"/><rect x="14.72" y="170.96" width="2.73" height="0.9" fill="#4ec9b0"/><rect x="17.44" y="170.96" width="0.55" height="0.9" fill="#d4d4d4"/><rect x="2.18" y="172.12" width="1.64" height="0.9" fill="#d4d4d4"/><rect x="2.18" y="173.29" width="3.27" height="0.9" fill="#c586c0"/><rect x="6.00" y="173.29" width="1.64" height="0.9" fill="#9cdcfe"/><rect x="8.18" y="173.29" width="1.09" height="0.9" fill="#c586c0"/><rect x="9.81" y="173.29" width="8.72" height="0.9" fill="#4ec9b0"/><rect x="18.53" y="173.29" width="0.55" height="0.9" fill="#d4d4d4"/><rect x="1.09" y="174.45" width="0.55" height="0.9" fill="#d4d4d4"/><rect x="1.09" y="176.78" width="3.82" height="0.9" fill="#569cd6"/><rect x="5.45" y="176.78" width="6.54" height="0.9" fill="#9cdcfe"/><rect x="11.99" y="176.78" width="0.55" height="0.9" fill="#d4d4d4"/><rect x="12.54" y="176.78" width="2.73" height="0.9" fill="#9cdcfe"/><rect x="15.26" y="176.78" width="0.55" height="0.9" fill="#d4d4d4"/><rect x="16.35" y="176.78" width="1.64" height="0.9" fill="#569cd6"/><rect x="17.99" y="176.78" width="1.09" height="0.9" fill="#d4d4d4"/><rect x="19.62" y="176.78" width="2.18" height="0.9" fill="#569cd6"/><rect x="22.35" y="176.78" width="0.55" height="0.9" fill="#d4d4d4"/><rect x="2.18" y="177.94" width="2.18" height="0.9" fill="#569cd6"/><rect x="4.36" y="177.94" width="0.55" height="0.9" fill="#d4d4d4"/><rect x="4.91" y="177.94" width="5.45" height="0.9" fill="#9cdcfe"/><rect x="10.36" y="177.94" width="0.55" height="0.9" fill="#d4d4d4"/><rect x="10.90" y="177.94" width="4.91" height="0.9" fill="#9cdcfe"/><rect x="16.35" y="177.94" width="0.55" height="0.9" fill="#d4d4d4"/><rect x="17.44" y="177.94" width="24.53" height="0.9" fill="#ce9178"/><rect x="41.97" y="177.94" width="0.55" height="0.9" fill="#d4d4d4"/><rect x="1.09" y="179.10" width="0.55" height="0.9" fill="#d4d4d4"/><rect x="1.09" y="181.43" width="3.82" height="0.9" fill="#569cd6"/><rect x="5.45" y="181.43" width="7.09" height="0.9" fill="#9cdcfe"/><rect x="12.54" y="181.43" width="0.55" height="0.9" fill="#d4d4d4"/><rect x="13.08" y="181.43" width="2.73" height="0.9" fill="#9cdcfe"/><rect x="15.81" y="181.43" width="0.55" height="0.9" fill="#d4d4d4"/><rect x="16.89" y="181.43" width="3.27" height="0.9" fill="#569cd6"/><rect x="20.17" y="181.43" width="0.55" height="0.9" fill="#d4d4d4"/><rect x="21.26" y="181.43" width="2.73" height="0.9" fill="#9cdcfe"/><rect x="23.98" y="181.43" width="0.55" height="0.9" fill="#d4d4d4"/><rect x="25.07" y="181.43" width="3.27" height="0.9" fill="#569cd6"/><rect x="28.34" y="181.43" width="1.09" height="0.9" fill="#d4d4d4"/><rect x="29.98" y="181.43" width="2.18" height="0.9" fill="#569cd6"/><rect x="32.70" y="181.43" width="0.55" height="0.9" fill="#d4d4d4"/><rect x="2.18" y="182.59" width="2.73" height="0.9" fill="#569cd6"/><rect x="5.45" y="182.59" width="2.73" height="0.9" fill="#9cdcfe"/><rect x="8.72" y="182.59" width="0.55" height="0.9" fill="#d4d4d4"/><rect x="9.81" y="182.59" width="2.18" height="0.9" fill="#4ec9b0"/><rect x="11.99" y="182.59" width="0.55" height="0.9" fill="#d4d4d4"/><rect x="12.54" y="182.59" width="2.18" height="0.9" fill="#9cdcfe"/><rect x="14.72" y="182.59" width="0.55" height="0.9" fill="#d4d4d4"/><rect x="15.26" y="182.59" width="2.73" height="0.9" fill="#9cdcfe"/><rect x="18.53" y="182.59" width="0.55" height="0.9" fill="#d4d4d4"/><rect x="19.62" y="182.59" width="2.18" height="0.9" fill="#569cd6"/><rect x="21.80" y="182.59" width="0.55" height="0.9" fill="#d4d4d4"/><rect x="22.35" y="182.59" width="5.45" height="0.9" fill="#9cdcfe"/><rect x="27.80" y="182.59" width="0.55" height="0.9" fill="#d4d4d4"/><rect x="28.34" y="182.59" width="4.36" height="0.9" fill="#9cdcfe"/><rect x="32.70" y="182.59" width="1.09" height="0.9" fill="#d4d4d4"/><rect x="2.18" y="183.75" width="1.64" height="0.9" fill="#569cd6"/><rect x="4.36" y="183.75" width="2.18" height="0.9" fill="#9cdcfe"/><rect x="7.09" y="183.75" width="0.55" height="0.9" fill="#d4d4d4"/><rect x="8.18" y="183.75" width="13.63" height="0.9" fill="#ce9178"/><rect x="21.80" y="183.75" width="0.55" height="0.9" fill="#d4d4d4"/><rect x="2.18" y="184.92" width="1.64" height="0.9" fill="#c586c0"/><rect x="4.36" y="184.92" width="0.55" height="0.9" fill="#d4d4d4"/><rect x="4.91" y="184.92" width="1.64" height="0.9" fill="#569cd6"/><rect x="7.09" y="184.92" width="0.55" height="0.9" fill="#9cdcfe"/><rect x="8.18" y="184.92" width="2.18" height="0.9" fill="#d4d4d4"/><rect x="10.90" y="184.92" width="0.55" height="0.9" fill="#9cdcfe"/><rect x="11.99" y="184.92" width="0.55" height="0.9" fill="#d4d4d4"/><rect x="13.08" y="184.92" width="2.73" height="0.9" fill="#9cdcfe"/><rect x="15.81" y="184.92" width="0.55" height="0.9" fill="#d4d4d4"/><rect x="16.89" y="184.92" width="0.55" height="0.9" fill="#9cdcfe"/><rect x="17.44" y="184.92" width="2.73" height="0.9" fill="#d4d4d4"/><rect x="3.27" y="186.08" width="2.18" height="0.9" fill="#9cdcfe"/><rect x="6.00" y="186.08" width="1.09" height="0.9" fill="#d4d4d4"/><rect x="7.63" y="186.08" width="38.70" height="0.9" fill="#ce9178"/><rect x="46.33" y="186.08" width="0.55" height="0.9" fill="#d4d4d4"/><rect x="2.18" y="187.24" width="0.55" height="0.9" fill="#d4d4d4"/><rect x="2.18" y="188.41" width="2.18" height="0.9" fill="#9cdcfe"/><rect x="4.91" y="188.41" width="1.09" height="0.9" fill="#d4d4d4"/><rect x="6.54" y="188.41" width="4.36" height="0.9" fill="#ce9178"/><rect x="10.90" y="188.41" width="0.55" height="0.9" fill="#d4d4d4"/><rect x="2.18" y="189.57" width="2.18" height="0.9" fill="#569cd6"/><rect x="4.36" y="189.57" width="0.55" height="0.9" fill="#d4d4d4"/><rect x="4.91" y="189.57" width="5.45" height="0.9" fill="#9cdcfe"/><rect x="10.36" y="189.57" width="0.55" height="0.9" fill="#d4d4d4"/><rect x="10.90" y="189.57" width="7.09" height="0.9" fill="#9cdcfe"/><rect x="17.99" y="189.57" width="0.55" height="0.9" fill="#d4d4d4"/><rect x="18.53" y="189.57" width="4.91" height="0.9" fill="#ce9178"/><rect x="23.44" y="189.57" width="1.09" height="0.9" fill="#d4d4d4"/><rect x="24.53" y="189.57" width="4.91" height="0.9" fill="#9cdcfe"/><rect x="29.98" y="189.57" width="0.55" height="0.9" fill="#d4d4d4"/><rect x="31.07" y="189.57" width="2.18" height="0.9" fill="#9cdcfe"/><rect x="33.25" y="189.57" width="0.55" height="0.9" fill="#d4d4d4"/><rect x="1.09" y="190.73" width="0.55" height="0.9" fill="#d4d4d4"/><rect x="1.09" y="193.06" width="3.82" height="0.9" fill="#569cd6"/><rect x="5.45" y="193.06" width="7.09" height="0.9" fill="#9cdcfe"/><rect x="12.54" y="193.06" width="1.64" height="0.9" fill="#d4d4d4"/><rect x="14.72" y="193.06" width="2.18" height="0.9" fill="#569cd6"/><rect x="17.44" y="193.06" width="0.55" height="0.9" fill="#d4d4d4"/><rect x="2.18" y="194.22" width="2.73" height="0.9" fill="#569cd6"/><rect x="5.45" y="194.22" width="2.73" height="0.9" fill="#9cdcfe"/><rect x="8.72" y="194.22" width="0.55" height="0.9" fill="#d4d4d4"/><rect x="9.81" y="194.22" width="2.18" height="0.9" fill="#569cd6"/><rect x="11.99" y="194.22" width="0.55" height="0.9" fill="#d4d4d4"/><rect x="12.54" y="194.22" width="5.45" height="0.9" fill="#9cdcfe"/><rect x="17.99" y="194.22" width="0.55" height="0.9" fill="#d4d4d4"/><rect x="18.53" y="194.22" width="8.72" height="0.9" fill="#9cdcfe"/><rect x="27.25" y="194.22" width="0.55" height="0.9" fill="#d4d4d4"/><rect x="27.80" y="194.22" width="7.63" height="0.9" fill="#ce9178"/><rect x="35.43" y="194.22" width="1.09" height="0.9" fill="#d4d4d4"/><rect x="2.18" y="195.38" width="1.64" height="0.9" fill="#c586c0"/><rect x="4.36" y="195.38" width="0.55" height="0.9" fill="#d4d4d4"/><rect x="4.91" y="195.38" width="1.64" height="0.9" fill="#569cd6"/><rect x="7.09" y="195.38" width="0.55" height="0.9" fill="#9cdcfe"/><rect x="8.18" y="195.38" width="2.18" height="0.9" fill="#d4d4d4"/><rect x="10.90" y="195.38" width="0.55" height="0.9" fill="#9cdcfe"/><rect x="11.99" y="195.38" width="0.55" height="0.9" fill="#d4d4d4"/><rect x="13.08" y="195.38" width="2.73" height="0.9" fill="#9cdcfe"/><rect x="15.81" y="195.38" width="0.55" height="0.9" fill="#d4d4d4"/><rect x="16.35" y="195.38" width="3.27" height="0.9" fill="#9cdcfe"/><rect x="19.62" y="195.38" width="0.55" height="0.9" fill="#d4d4d4"/><rect x="20.71" y="195.38" width="0.55" height="0.9" fill="#9cdcfe"/><rect x="21.26" y="195.38" width="2.73" height="0.9" fill="#d4d4d4"/><rect x="3.27" y="196.55" width="2.73" height="0.9" fill="#9cdcfe"/><rect x="6.00" y="196.55" width="0.55" height="0.9" fill="#d4d4d4"/><rect x="6.54" y="196.55" width="0.55" height="0.9" fill="#9cdcfe"/><rect x="7.09" y="196.55" width="1.09" height="0.9" fill="#d4d4d4"/><rect x="8.18" y="196.55" width="8.72" height="0.9" fill="#9cdcfe"/><rect x="16.89" y="196.55" width="0.55" height="0.9" fill="#d4d4d4"/><rect x="17.44" y="196.55" width="3.82" height="0.9" fill="#ce9178"/><rect x="21.26" y="196.55" width="1.64" height="0.9" fill="#d4d4d4"/><rect x="22.89" y="196.55" width="0.55" height="0.9" fill="#9cdcfe"/><rect x="23.44" y="196.55" width="0.55" height="0.9" fill="#d4d4d4"/><rect x="24.53" y="196.55" width="2.73" height="0.9" fill="#4ec9b0"/><rect x="27.25" y="196.55" width="3.27" height="0.9" fill="#d4d4d4"/><rect x="4.36" y="197.71" width="0.55" height="0.9" fill="#9cdcfe"/><rect x="4.91" y="197.71" width="0.55" height="0.9" fill="#d4d4d4"/><rect x="5.45" y="197.71" width="7.63" height="0.9" fill="#9cdcfe"/><rect x="13.08" y="197.71" width="1.64" height="0.9" fill="#d4d4d4"/><rect x="4.36" y="198.87" width="2.73" height="0.9" fill="#569cd6"/><rect x="7.63" y="198.87" width="2.73" height="0.9" fill="#9cdcfe"/><rect x="10.90" y="198.87" width="1.64" height="0.9" fill="#d4d4d4"/><rect x="12.54" y="198.87" width="0.55" height="0.9" fill="#9cdcfe"/><rect x="13.08" y="198.87" width="0.55" height="0.9" fill="#d4d4d4"/><rect x="13.63" y="198.87" width="3.27" height="0.9" fill="#9cdcfe"/><rect x="17.44" y="198.87" width="1.09" height="0.9" fill="#c586c0"/><rect x="19.08" y="198.87" width="6.00" height="0.9" fill="#4ec9b0"/><rect x="25.07" y="198.87" width="1.09" height="0.9" fill="#d4d4d4"/><rect x="26.16" y="198.87" width="6.54" height="0.9" fill="#9cdcfe"/><rect x="32.70" y="198.87" width="0.55" height="0.9" fill="#d4d4d4"/><rect x="33.25" y="198.87" width="6.54" height="0.9" fill="#ce9178"/><rect x="39.79" y="198.87" width="1.09" height="0.9" fill="#d4d4d4"/><rect x="4.36" y="200.04" width="2.18" height="0.9" fill="#569cd6"/><rect x="6.54" y="200.04" width="0.55" height="0.9" fill="#d4d4d4"/><rect x="7.09" y="200.04" width="6.54" height="0.9" fill="#9cdcfe"/><rect x="13.63" y="200.04" width="0.55" height="0.9" fill="#d4d4d4"/><rect x="14.17" y="200.04" width="2.18" height="0.9" fill="#569cd6"/><rect x="16.35" y="200.04" width="0.55" height="0.9" fill="#d4d4d4"/><rect x="16.89" y="200.04" width="5.45" height="0.9" fill="#9cdcfe"/><rect x="22.35" y="200.04" width="0.55" height="0.9" fill="#d4d4d4"/><rect x="22.89" y="200.04" width="2.73" height="0.9" fill="#9cdcfe"/><rect x="26.16" y="200.04" width="0.55" height="0.9" fill="#d4d4d4"/><rect x="27.25" y="200.04" width="6.54" height="0.9" fill="#ce9178"/><rect x="34.34" y="200.04" width="0.55" height="0.9" fill="#d4d4d4"/><rect x="35.43" y="200.04" width="2.73" height="0.9" fill="#9cdcfe"/><rect x="38.15" y="200.04" width="0.55" height="0.9" fill="#d4d4d4"/><rect x="5.45" y="201.20" width="0.55" height="0.9" fill="#d4d4d4"/><rect x="6.00" y="201.20" width="2.18" height="0.9" fill="#9cdcfe"/><rect x="8.18" y="201.20" width="1.09" height="0.9" fill="#d4d4d4"/><rect x="9.27" y="201.20" width="3.82" height="0.9" fill="#9cdcfe"/><rect x="13.08" y="201.20" width="3.27" height="0.9" fill="#d4d4d4"/><rect x="6.54" y="202.36" width="2.18" height="0.9" fill="#569cd6"/><rect x="8.72" y="202.36" width="0.55" height="0.9" fill="#d4d4d4"/><rect x="9.27" y="202.36" width="6.00" height="0.9" fill="#9cdcfe"/><rect x="15.26" y="202.36" width="0.55" height="0.9" fill="#d4d4d4"/><rect x="15.81" y="202.36" width="3.82" height="0.9" fill="#9cdcfe"/><rect x="19.62" y="202.36" width="0.55" height="0.9" fill="#d4d4d4"/><rect x="20.17" y="202.36" width="9.81" height="0.9" fill="#4ec9b0"/><rect x="29.98" y="202.36" width="0.55" height="0.9" fill="#d4d4d4"/><rect x="30.52" y="202.36" width="8.18" height="0.9" fill="#4ec9b0"/><rect x="38.70" y="202.36" width="0.55" height="0.9" fill="#d4d4d4"/><rect x="39.24" y="202.36" width="2.73" height="0.9" fill="#4ec9b0"/><rect x="41.97" y="202.36" width="0.55" height="0.9" fill="#d4d4d4"/><rect x="42.51" y="202.36" width="2.18" height="0.9" fill="#4ec9b0"/><rect x="44.69" y="202.36" width="1.09" height="0.9" fill="#d4d4d4"/><rect x="5.45" y="203.53" width="1.64" height="0.9" fill="#d4d4d4"/><rect x="3.27" y="204.69" width="1.64" height="0.9" fill="#d4d4d4"/><rect x="2.18" y="205.85" width="0.55" height="0.9" fill="#d4d4d4"/><rect x="1.09" y="207.01" width="0.55" height="0.9" fill="#d4d4d4"/><rect x="1.09" y="209.34" width="3.82" height="0.9" fill="#569cd6"/><rect x="5.45" y="209.34" width="6.54" height="0.9" fill="#9cdcfe"/><rect x="11.99" y="209.34" width="1.64" height="0.9" fill="#d4d4d4"/><rect x="14.17" y="209.34" width="3.82" height="0.9" fill="#4ec9b0"/><rect x="17.99" y="209.34" width="0.55" height="0.9" fill="#d4d4d4"/><rect x="18.53" y="209.34" width="1.64" height="0.9" fill="#569cd6"/><rect x="20.17" y="209.34" width="1.64" height="0.9" fill="#d4d4d4"/><rect x="2.18" y="210.50" width="2.73" height="0.9" fill="#569cd6"/><rect x="5.45" y="210.50" width="1.64" height="0.9" fill="#9cdcfe"/><rect x="7.63" y="210.50" width="0.55" height="0.9" fill="#d4d4d4"/><rect x="8.72" y="210.50" width="53.28" height="0.9" fill="#ce9178"/><rect x="2.18" y="211.67" width="3.27" height="0.9" fill="#c586c0"/><rect x="6.00" y="211.67" width="2.18" height="0.9" fill="#569cd6"/><rect x="8.18" y="211.67" width="0.55" height="0.9" fill="#d4d4d4"/><rect x="8.72" y="211.67" width="3.82" height="0.9" fill="#9cdcfe"/><rect x="12.54" y="211.67" width="0.55" height="0.9" fill="#d4d4d4"/><rect x="13.08" y="211.67" width="6.54" height="0.9" fill="#9cdcfe"/><rect x="19.62" y="211.67" width="0.55" height="0.9" fill="#d4d4d4"/><rect x="20.17" y="211.67" width="1.64" height="0.9" fill="#569cd6"/><rect x="21.80" y="211.67" width="0.55" height="0.9" fill="#d4d4d4"/><rect x="22.35" y="211.67" width="1.64" height="0.9" fill="#9cdcfe"/><rect x="23.98" y="211.67" width="0.55" height="0.9" fill="#d4d4d4"/><rect x="25.07" y="211.67" width="6.54" height="0.9" fill="#4ec9b0"/><rect x="31.61" y="211.67" width="0.55" height="0.9" fill="#d4d4d4"/><rect x="32.16" y="211.67" width="7.63" height="0.9" fill="#9cdcfe"/><rect x="39.79" y="211.67" width="0.55" height="0.9" fill="#d4d4d4"/><rect x="40.33" y="211.67" width="1.09" height="0.9" fill="#9cdcfe"/><rect x="41.42" y="211.67" width="0.55" height="0.9" fill="#d4d4d4"/><rect x="3.27" y="212.83" width="0.55" height="0.9" fill="#d4d4d4"/><rect x="3.82" y="212.83" width="2.18" height="0.9" fill="#9cdcfe"/><rect x="6.00" y="212.83" width="1.09" height="0.9" fill="#d4d4d4"/><rect x="7.09" y="212.83" width="1.64" height="0.9" fill="#9cdcfe"/><rect x="8.72" y="212.83" width="0.55" height="0.9" fill="#d4d4d4"/><rect x="9.81" y="212.83" width="10.90" height="0.9" fill="#4ec9b0"/><rect x="20.71" y="212.83" width="2.18" height="0.9" fill="#d4d4d4"/><rect x="23.44" y="212.83" width="1.64" height="0.9" fill="#9cdcfe"/><rect x="25.07" y="212.83" width="0.55" height="0.9" fill="#d4d4d4"/><rect x="25.62" y="212.83" width="2.18" height="0.9" fill="#9cdcfe"/><rect x="27.80" y="212.83" width="2.18" height="0.9" fill="#d4d4d4"/><rect x="1.09" y="213.99" width="0.55" height="0.9" fill="#d4d4d4"/><rect x="1.09" y="216.32" width="3.82" height="0.9" fill="#569cd6"/><rect x="5.45" y="216.32" width="8.18" height="0.9" fill="#9cdcfe"/><rect x="13.63" y="216.32" width="0.55" height="0.9" fill="#d4d4d4"/><rect x="14.17" y="216.32" width="2.18" height="0.9" fill="#9cdcfe"/><rect x="16.35" y="216.32" width="0.55" height="0.9" fill="#d4d4d4"/><rect x="17.44" y="216.32" width="1.64" height="0.9" fill="#569cd6"/><rect x="19.08" y="216.32" width="1.09" height="0.9" fill="#d4d4d4"/><rect x="20.71" y="216.32" width="2.18" height="0.9" fill="#569cd6"/><rect x="23.44" y="216.32" width="0.55" height="0.9" fill="#d4d4d4"/><rect x="2.18" y="217.48" width="1.64" height="0.9" fill="#569cd6"/><rect x="4.36" y="217.48" width="2.18" height="0.9" fill="#9cdcfe"/><rect x="7.09" y="217.48" width="0.55" height="0.9" fill="#d4d4d4"/><rect x="8.18" y="217.48" width="1.09" height="0.9" fill="#ce9178"/><rect x="9.27" y="217.48" width="0.55" height="0.9" fill="#d4d4d4"/><rect x="2.18" y="218.64" width="2.18" height="0.9" fill="#9cdcfe"/><rect x="4.36" y="218.64" width="0.55" height="0.9" fill="#d4d4d4"/><rect x="4.91" y="218.64" width="3.82" height="0.9" fill="#9cdcfe"/><rect x="8.72" y="218.64" width="1.09" height="0.9" fill="#d4d4d4"/><rect x="9.81" y="218.64" width="0.55" height="0.9" fill="#9cdcfe"/><rect x="10.36" y="218.64" width="0.55" height="0.9" fill="#d4d4d4"/><rect x="11.45" y="218.64" width="1.64" height="0.9" fill="#569cd6"/><rect x="13.08" y="218.64" width="3.27" height="0.9" fill="#d4d4d4"/><rect x="3.27" y="219.81" width="2.18" height="0.9" fill="#9cdcfe"/><rect x="6.00" y="219.81" width="1.09" height="0.9" fill="#d4d4d4"/><rect x="7.63" y="219.81" width="11.99" height="0.9" fill="#ce9178"/><rect x="4.36" y="220.97" width="0.55" height="0.9" fill="#d4d4d4"/><rect x="4.91" y="220.97" width="2.18" height="0.9" fill="#9cdcfe"/><rect x="7.09" y="220.97" width="0.55" height="0.9" fill="#d4d4d4"/><rect x="7.63" y="220.97" width="0.55" height="0.9" fill="#9cdcfe"/><rect x="8.18" y="220.97" width="0.55" height="0.9" fill="#d4d4d4"/><rect x="8.72" y="220.97" width="0.55" height="0.9" fill="#9cdcfe"/><rect x="9.27" y="220.97" width="0.55" height="0.9" fill="#d4d4d4"/><rect x="9.81" y="220.97" width="2.18" height="0.9" fill="#4ec9b0"/><rect x="11.99" y="220.97" width="1.64" height="0.9" fill="#d4d4d4"/><rect x="13.63" y="220.97" width="2.18" height="0.9" fill="#9cdcfe"/><rect x="15.81" y="220.97" width="0.55" height="0.9" fill="#d4d4d4"/><rect x="4.36" y="222.13" width="0.55" height="0.9" fill="#d4d4d4"/><rect x="4.91" y="222.13" width="1.09" height="0.9" fill="#9cdcfe"/><rect x="6.00" y="222.13" width="0.55" height="0.9" fill="#d4d4d4"/><rect x="5.45" y="223.30" width="0.55" height="0.9" fill="#9cdcfe"/><rect x="6.00" y="223.30" width="0.55" height="0.9" fill="#d4d4d4"/><rect x="6.54" y="223.30" width="0.55" height="0.9" fill="#9cdcfe"/><rect x="7.09" y="223.30" width="0.55" height="0.9" fill="#d4d4d4"/><rect x="7.63" y="223.30" width="3.82" height="0.9" fill="#4ec9b0"/><rect x="11.45" y="223.30" width="0.55" height="0.9" fill="#d4d4d4"/><rect x="11.99" y="223.30" width="1.64" height="0.9" fill="#9cdcfe"/><rect x="13.63" y="223.30" width="1.09" height="0.9" fill="#d4d4d4"/><rect x="14.72" y="223.30" width="0.55" height="0.9" fill="#9cdcfe"/><rect x="15.26" y="223.30" width="2.18" height="0.9" fill="#d4d4d4"/><rect x="17.99" y="223.30" width="16.35" height="0.9" fill="#ce9178"/><rect x="34.34" y="223.30" width="1.09" height="0.9" fill="#d4d4d4"/><rect x="35.43" y="223.30" width="2.18" height="0.9" fill="#9cdcfe"/><rect x="37.61" y="223.30" width="0.55" height="0.9" fill="#d4d4d4"/><rect x="38.15" y="223.30" width="1.09" height="0.9" fill="#ce9178"/><rect x="39.24" y="223.30" width="1.09" height="0.9" fill="#d4d4d4"/><rect x="4.36" y="224.46" width="1.09" height="0.9" fill="#d4d4d4"/><rect x="5.45" y="224.46" width="1.09" height="0.9" fill="#9cdcfe"/><rect x="6.54" y="224.46" width="0.55" height="0.9" fill="#d4d4d4"/><rect x="3.27" y="225.62" width="1.09" height="0.9" fill="#d4d4d4"/><rect x="4.36" y="225.62" width="1.64" height="0.9" fill="#9cdcfe"/><rect x="6.00" y="225.62" width="0.55" height="0.9" fill="#d4d4d4"/><rect x="6.54" y="225.62" width="1.09" height="0.9" fill="#ce9178"/><rect x="2.18" y="226.78" width="1.64" height="0.9" fill="#d4d4d4"/><rect x="2.18" y="227.95" width="2.18" height="0.9" fill="#569cd6"/><rect x="4.36" y="227.95" width="0.55" height="0.9" fill="#d4d4d4"/><rect x="4.91" y="227.95" width="5.45" height="0.9" fill="#9cdcfe"/><rect x="10.36" y="227.95" width="0.55" height="0.9" fill="#d4d4d4"/><rect x="10.90" y="227.95" width="7.09" height="0.9" fill="#9cdcfe"/><rect x="17.99" y="227.95" width="0.55" height="0.9" fill="#d4d4d4"/><rect x="18.53" y="227.95" width="6.00" height="0.9" fill="#ce9178"/><rect x="24.53" y="227.95" width="1.09" height="0.9" fill="#d4d4d4"/><rect x="25.62" y="227.95" width="4.91" height="0.9" fill="#9cdcfe"/><rect x="31.07" y="227.95" width="0.55" height="0.9" fill="#d4d4d4"/><rect x="32.16" y="227.95" width="2.18" height="0.9" fill="#9cdcfe"/><rect x="34.34" y="227.95" width="0.55" height="0.9" fill="#d4d4d4"/><rect x="1.09" y="229.11" width="0.55" height="0.9" fill="#d4d4d4"/><rect x="1.09" y="231.44" width="3.82" height="0.9" fill="#569cd6"/><rect x="5.45" y="231.44" width="7.09" height="0.9" fill="#9cdcfe"/><rect x="12.54" y="231.44" width="1.64" height="0.9" fill="#d4d4d4"/><rect x="14.72" y="231.44" width="3.27" height="0.9" fill="#569cd6"/><rect x="18.53" y="231.44" width="0.55" height="0.9" fill="#d4d4d4"/><rect x="2.18" y="232.60" width="3.27" height="0.9" fill="#c586c0"/><rect x="6.00" y="232.60" width="0.55" height="0.9" fill="#ce9178"/><rect x="3.27" y="233.76" width="0.55" height="0.9" fill="#d4d4d4"/><rect x="3.82" y="233.76" width="1.64" height="0.9" fill="#9cdcfe"/><rect x="6.00" y="233.76" width="2.73" height="0.9" fill="#569cd6"/><rect x="8.72" y="233.76" width="0.55" height="0.9" fill="#d4d4d4"/><rect x="9.27" y="233.76" width="9.81" height="0.9" fill="#ce9178"/><rect x="19.08" y="233.76" width="0.55" height="0.9" fill="#d4d4d4"/><rect x="4.36" y="234.93" width="0.55" height="0.9" fill="#d4d4d4"/><rect x="4.91" y="234.93" width="1.64" height="0.9" fill="#9cdcfe"/><rect x="7.09" y="234.93" width="2.73" height="0.9" fill="#569cd6"/><rect x="9.81" y="234.93" width="0.55" height="0.9" fill="#d4d4d4"/><rect x="10.36" y="234.93" width="7.63" height="0.9" fill="#ce9178"/><rect x="17.99" y="234.93" width="0.55" height="0.9" fill="#d4d4d4"/><rect x="5.45" y="236.09" width="0.55" height="0.9" fill="#d4d4d4"/><rect x="6.00" y="236.09" width="2.73" height="0.9" fill="#9cdcfe"/><rect x="9.27" y="236.09" width="2.73" height="0.9" fill="#569cd6"/><rect x="11.99" y="236.09" width="0.55" height="0.9" fill="#d4d4d4"/><rect x="12.54" y="236.09" width="10.90" height="0.9" fill="#ce9178"/><rect x="23.98" y="236.09" width="1.09" height="0.9" fill="#9cdcfe"/><rect x="25.07" y="236.09" width="0.55" height="0.9" fill="#d4d4d4"/><rect x="25.62" y="236.09" width="6.00" height="0.9" fill="#ce9178"/><rect x="32.16" y="236.09" width="2.18" height="0.9" fill="#9cdcfe"/><rect x="34.34" y="236.09" width="0.55" height="0.9" fill="#d4d4d4"/><rect x="34.88" y="236.09" width="3.27" height="0.9" fill="#ce9178"/><rect x="38.70" y="236.09" width="2.73" height="0.9" fill="#9cdcfe"/><rect x="41.42" y="236.09" width="0.55" height="0.9" fill="#d4d4d4"/><rect x="41.97" y="236.09" width="1.09" height="0.9" fill="#ce9178"/><rect x="43.60" y="236.09" width="1.09" height="0.9" fill="#d4d4d4"/><rect x="5.45" y="237.25" width="0.55" height="0.9" fill="#d4d4d4"/><rect x="6.00" y="237.25" width="2.73" height="0.9" fill="#9cdcfe"/><rect x="9.27" y="237.25" width="2.73" height="0.9" fill="#569cd6"/><rect x="11.99" y="237.25" width="0.55" height="0.9" fill="#d4d4d4"/><rect x="12.54" y="237.25" width="10.90" height="0.9" fill="#ce9178"/><rect x="23.44" y="237.25" width="0.55" height="0.9" fill="#d4d4d4"/><rect x="6.54" y="238.42" width="0.55" height="0.9" fill="#d4d4d4"/><rect x="7.09" y="238.42" width="0.55" height="0.9" fill="#9cdcfe"/><rect x="8.18" y="238.42" width="2.73" height="0.9" fill="#569cd6"/><rect x="10.90" y="238.42" width="0.55" height="0.9" fill="#d4d4d4"/><rect x="11.45" y="238.42" width="23.44" height="0.9" fill="#ce9178"/><rect x="34.88" y="238.42" width="1.64" height="0.9" fill="#d4d4d4"/><rect x="36.52" y="238.42" width="0.55" height="0.9" fill="#9cdcfe"/><rect x="37.06" y="238.42" width="0.55" height="0.9" fill="#d4d4d4"/><rect x="6.54" y="239.58" width="0.55" height="0.9" fill="#d4d4d4"/><rect x="7.09" y="239.58" width="2.18" height="0.9" fill="#9cdcfe"/><rect x="9.81" y="239.58" width="2.73" height="0.9" fill="#569cd6"/><rect x="12.54" y="239.58" width="0.55" height="0.9" fill="#d4d4d4"/><rect x="13.08" y="239.58" width="10.36" height="0.9" fill="#ce9178"/><rect x="23.44" y="239.58" width="0.55" height="0.9" fill="#d4d4d4"/><rect x="23.98" y="239.58" width="3.27" height="0.9" fill="#4ec9b0"/><rect x="27.25" y="239.58" width="1.09" height="0.9" fill="#d4d4d4"/><rect x="28.34" y="239.58" width="2.18" height="0.9" fill="#9cdcfe"/><rect x="30.52" y="239.58" width="0.55" height="0.9" fill="#d4d4d4"/><rect x="5.45" y="240.74" width="1.09" height="0.9" fill="#d4d4d4"/><rect x="6.54" y="240.74" width="2.73" height="0.9" fill="#9cdcfe"/><rect x="9.27" y="240.74" width="0.55" height="0.9" fill="#d4d4d4"/><rect x="5.45" y="241.90" width="0.55" height="0.9" fill="#d4d4d4"/><rect x="6.00" y="241.90" width="1.64" height="0.9" fill="#9cdcfe"/><rect x="8.18" y="241.90" width="2.73" height="0.9" fill="#569cd6"/><rect x="10.90" y="241.90" width="0.55" height="0.9" fill="#d4d4d4"/><rect x="11.45" y="241.90" width="34.34" height="0.9" fill="#ce9178"/><rect x="45.78" y="241.90" width="0.55" height="0.9" fill="#d4d4d4"/><rect x="6.54" y="243.07" width="0.55" height="0.9" fill="#d4d4d4"/><rect x="7.09" y="243.07" width="3.27" height="0.9" fill="#9cdcfe"/><rect x="10.90" y="243.07" width="2.73" height="0.9" fill="#569cd6"/><rect x="13.63" y="243.07" width="0.55" height="0.9" fill="#d4d4d4"/><rect x="14.17" y="243.07" width="13.63" height="0.9" fill="#ce9178"/><rect x="27.80" y="243.07" width="0.55" height="0.9" fill="#d4d4d4"/><rect x="7.63" y="244.23" width="0.55" height="0.9" fill="#d4d4d4"/><rect x="8.18" y="244.23" width="2.18" height="0.9" fill="#9cdcfe"/><rect x="10.90" y="244.23" width="2.73" height="0.9" fill="#569cd6"/><rect x="13.63" y="244.23" width="0.55" height="0.9" fill="#d4d4d4"/><rect x="14.17" y="244.23" width="12.54" height="0.9" fill="#ce9178"/><rect x="26.71" y="244.23" width="1.09" height="0.9" fill="#d4d4d4"/><rect x="27.80" y="244.23" width="0.55" height="0.9" fill="#9cdcfe"/><rect x="28.89" y="244.23" width="2.73" height="0.9" fill="#569cd6"/><rect x="31.61" y="244.23" width="0.55" height="0.9" fill="#d4d4d4"/><rect x="32.16" y="244.23" width="13.08" height="0.9" fill="#ce9178"/><rect x="45.24" y="244.23" width="1.64" height="0.9" fill="#d4d4d4"/><rect x="46.87" y="244.23" width="0.55" height="0.9" fill="#9cdcfe"/><rect x="47.42" y="244.23" width="1.64" height="0.9" fill="#d4d4d4"/><rect x="49.05" y="244.23" width="2.18" height="0.9" fill="#9cdcfe"/><rect x="51.23" y="244.23" width="0.55" height="0.9" fill="#d4d4d4"/><rect x="7.63" y="245.39" width="0.55" height="0.9" fill="#d4d4d4"/><rect x="8.18" y="245.39" width="2.18" height="0.9" fill="#9cdcfe"/><rect x="10.90" y="245.39" width="2.73" height="0.9" fill="#569cd6"/><rect x="13.63" y="245.39" width="0.55" height="0.9" fill="#d4d4d4"/><rect x="14.17" y="245.39" width="13.08" height="0.9" fill="#ce9178"/><rect x="27.25" y="245.39" width="1.64" height="0.9" fill="#d4d4d4"/><rect x="28.89" y="245.39" width="2.18" height="0.9" fill="#9cdcfe"/><rect x="31.07" y="245.39" width="0.55" height="0.9" fill="#d4d4d4"/><rect x="6.54" y="246.56" width="1.09" height="0.9" fill="#d4d4d4"/><rect x="7.63" y="246.56" width="3.27" height="0.9" fill="#9cdcfe"/><rect x="10.90" y="246.56" width="0.55" height="0.9" fill="#d4d4d4"/><rect x="5.45" y="247.72" width="1.09" height="0.9" fill="#d4d4d4"/><rect x="6.54" y="247.72" width="1.64" height="0.9" fill="#9cdcfe"/><rect x="8.18" y="247.72" width="0.55" height="0.9" fill="#d4d4d4"/><rect x="4.36" y="248.88" width="1.09" height="0.9" fill="#d4d4d4"/><rect x="5.45" y="248.88" width="1.64" height="0.9" fill="#9cdcfe"/><rect x="7.09" y="248.88" width="0.55" height="0.9" fill="#d4d4d4"/><rect x="3.27" y="250.05" width="1.09" height="0.9" fill="#d4d4d4"/><rect x="4.36" y="250.05" width="1.64" height="0.9" fill="#9cdcfe"/><rect x="6.00" y="250.05" width="0.55" height="0.9" fill="#d4d4d4"/><rect x="6.54" y="250.05" width="1.09" height="0.9" fill="#ce9178"/><rect x="1.09" y="251.21" width="0.55" height="0.9" fill="#d4d4d4"/><rect x="1.09" y="253.53" width="7.09" height="0.9" fill="#569cd6"/><rect x="8.72" y="253.53" width="6.00" height="0.9" fill="#9cdcfe"/><rect x="14.72" y="253.53" width="1.64" height="0.9" fill="#d4d4d4"/><rect x="16.89" y="253.53" width="3.82" height="0.9" fill="#4ec9b0"/><rect x="21.26" y="253.53" width="0.55" height="0.9" fill="#d4d4d4"/><rect x="2.18" y="254.70" width="3.27" height="0.9" fill="#c586c0"/><rect x="6.00" y="254.70" width="3.82" height="0.9" fill="#4ec9b0"/><rect x="9.81" y="254.70" width="0.55" height="0.9" fill="#d4d4d4"/><rect x="10.36" y="254.70" width="2.73" height="0.9" fill="#9cdcfe"/><rect x="13.08" y="254.70" width="0.55" height="0.9" fill="#d4d4d4"/><rect x="13.63" y="254.70" width="2.73" height="0.9" fill="#ce9178"/><rect x="16.35" y="254.70" width="1.09" height="0.9" fill="#d4d4d4"/><rect x="1.09" y="255.86" width="0.55" height="0.9" fill="#d4d4d4"/><rect x="1.09" y="258.19" width="4.91" height="0.9" fill="#569cd6"/><rect x="6.54" y="258.19" width="15.26" height="0.9" fill="#9cdcfe"/><rect x="21.80" y="258.19" width="1.64" height="0.9" fill="#d4d4d4"/><rect x="23.98" y="258.19" width="14.17" height="0.9" fill="#4ec9b0"/><rect x="38.70" y="258.19" width="0.55" height="0.9" fill="#d4d4d4"/><rect x="2.18" y="259.35" width="3.27" height="0.9" fill="#c586c0"/><rect x="6.00" y="259.35" width="0.55" height="0.9" fill="#d4d4d4"/><rect x="3.27" y="260.51" width="2.73" height="0.9" fill="#9cdcfe"/><rect x="6.00" y="260.51" width="1.64" height="0.9" fill="#d4d4d4"/><rect x="4.36" y="261.68" width="0.55" height="0.9" fill="#d4d4d4"/><rect x="5.45" y="262.84" width="3.27" height="0.9" fill="#9cdcfe"/><rect x="8.72" y="262.84" width="1.64" height="0.9" fill="#d4d4d4"/><rect x="6.54" y="264.00" width="6.00" height="0.9" fill="#9cdcfe"/><rect x="12.54" y="264.00" width="0.55" height="0.9" fill="#d4d4d4"/><rect x="13.63" y="264.00" width="3.82" height="0.9" fill="#9cdcfe"/><rect x="17.44" y="264.00" width="0.55" height="0.9" fill="#d4d4d4"/><rect x="17.99" y="264.00" width="12.54" height="0.9" fill="#4ec9b0"/><rect x="5.45" y="265.16" width="1.09" height="0.9" fill="#d4d4d4"/><rect x="5.45" y="266.33" width="3.27" height="0.9" fill="#9cdcfe"/><rect x="8.72" y="266.33" width="1.64" height="0.9" fill="#d4d4d4"/><rect x="6.54" y="267.49" width="0.55" height="0.9" fill="#d4d4d4"/><rect x="7.63" y="268.65" width="4.91" height="0.9" fill="#9cdcfe"/><rect x="12.54" y="268.65" width="0.55" height="0.9" fill="#d4d4d4"/><rect x="13.63" y="268.65" width="3.82" height="0.9" fill="#9cdcfe"/><rect x="17.44" y="268.65" width="0.55" height="0.9" fill="#d4d4d4"/><rect x="17.99" y="268.65" width="7.63" height="0.9" fill="#4ec9b0"/><rect x="25.62" y="268.65" width="0.55" height="0.9" fill="#d4d4d4"/><rect x="7.63" y="269.82" width="6.00" height="0.9" fill="#9cdcfe"/><rect x="13.63" y="269.82" width="1.64" height="0.9" fill="#d4d4d4"/><rect x="8.72" y="270.98" width="11.45" height="0.9" fill="#4ec9b0"/><rect x="20.17" y="270.98" width="0.55" height="0.9" fill="#d4d4d4"/><rect x="20.71" y="270.98" width="7.09" height="0.9" fill="#ce9178"/><rect x="27.80" y="270.98" width="1.64" height="0.9" fill="#d4d4d4"/><rect x="9.81" y="272.14" width="2.73" height="0.9" fill="#9cdcfe"/><rect x="12.54" y="272.14" width="0.55" height="0.9" fill="#d4d4d4"/><rect x="13.63" y="272.14" width="3.82" height="0.9" fill="#9cdcfe"/><rect x="17.44" y="272.14" width="0.55" height="0.9" fill="#d4d4d4"/><rect x="17.99" y="272.14" width="11.45" height="0.9" fill="#4ec9b0"/><rect x="8.72" y="273.31" width="1.64" height="0.9" fill="#d4d4d4"/><rect x="8.72" y="274.47" width="11.45" height="0.9" fill="#4ec9b0"/><rect x="20.17" y="274.47" width="0.55" height="0.9" fill="#d4d4d4"/><rect x="20.71" y="274.47" width="3.82" height="0.9" fill="#ce9178"/><rect x="24.53" y="274.47" width="1.64" height="0.9" fill="#d4d4d4"/><rect x="9.81" y="275.63" width="2.73" height="0.9" fill="#9cdcfe"/><rect x="12.54" y="275.63" width="0.55" height="0.9" fill="#d4d4d4"/><rect x="13.63" y="275.63" width="3.82" height="0.9" fill="#ce9178"/><rect x="8.72" y="276.79" width="1.64" height="0.9" fill="#d4d4d4"/><rect x="8.72" y="277.96" width="10.90" height="0.9" fill="#4ec9b0"/><rect x="19.62" y="277.96" width="0.55" height="0.9" fill="#d4d4d4"/><rect x="20.17" y="277.96" width="7.63" height="0.9" fill="#ce9178"/><rect x="27.80" y="277.96" width="1.64" height="0.9" fill="#d4d4d4"/><rect x="9.81" y="279.12" width="2.73" height="0.9" fill="#9cdcfe"/><rect x="12.54" y="279.12" width="0.55" height="0.9" fill="#d4d4d4"/><rect x="13.63" y="279.12" width="8.18" height="0.9" fill="#ce9178"/><rect x="21.80" y="279.12" width="0.55" height="0.9" fill="#d4d4d4"/><rect x="9.81" y="280.28" width="3.82" height="0.9" fill="#9cdcfe"/><rect x="13.63" y="280.28" width="1.64" height="0.9" fill="#d4d4d4"/><rect x="10.90" y="281.45" width="0.55" height="0.9" fill="#d4d4d4"/><rect x="11.99" y="281.45" width="1.64" height="0.9" fill="#9cdcfe"/><rect x="13.63" y="281.45" width="0.55" height="0.9" fill="#d4d4d4"/><rect x="14.72" y="281.45" width="1.64" height="0.9" fill="#ce9178"/><rect x="16.35" y="281.45" width="0.55" height="0.9" fill="#d4d4d4"/><rect x="17.44" y="281.45" width="2.18" height="0.9" fill="#9cdcfe"/><rect x="19.62" y="281.45" width="0.55" height="0.9" fill="#d4d4d4"/><rect x="20.71" y="281.45" width="14.17" height="0.9" fill="#ce9178"/><rect x="35.43" y="281.45" width="1.09" height="0.9" fill="#d4d4d4"/><rect x="10.90" y="282.61" width="0.55" height="0.9" fill="#d4d4d4"/><rect x="11.99" y="282.61" width="1.64" height="0.9" fill="#9cdcfe"/><rect x="13.63" y="282.61" width="0.55" height="0.9" fill="#d4d4d4"/><rect x="14.72" y="282.61" width="1.64" height="0.9" fill="#ce9178"/><rect x="16.35" y="282.61" width="0.55" height="0.9" fill="#d4d4d4"/><rect x="17.44" y="282.61" width="2.18" height="0.9" fill="#9cdcfe"/><rect x="19.62" y="282.61" width="0.55" height="0.9" fill="#d4d4d4"/><rect x="20.71" y="282.61" width="6.00" height="0.9" fill="#ce9178"/><rect x="27.25" y="282.61" width="1.09" height="0.9" fill="#d4d4d4"/><rect x="10.90" y="283.77" width="0.55" height="0.9" fill="#d4d4d4"/><rect x="11.99" y="283.77" width="1.64" height="0.9" fill="#9cdcfe"/><rect x="13.63" y="283.77" width="0.55" height="0.9" fill="#d4d4d4"/><rect x="14.72" y="283.77" width="1.64" height="0.9" fill="#ce9178"/><rect x="16.35" y="283.77" width="0.55" height="0.9" fill="#d4d4d4"/><rect x="17.44" y="283.77" width="2.18" height="0.9" fill="#9cdcfe"/><rect x="19.62" y="283.77" width="0.55" height="0.9" fill="#d4d4d4"/><rect x="20.71" y="283.77" width="3.82" height="0.9" fill="#ce9178"/><rect x="25.07" y="283.77" width="1.09" height="0.9" fill="#d4d4d4"/><rect x="10.90" y="284.94" width="0.55" height="0.9" fill="#d4d4d4"/><rect x="11.99" y="284.94" width="1.64" height="0.9" fill="#9cdcfe"/><rect x="13.63" y="284.94" width="0.55" height="0.9" fill="#d4d4d4"/><rect x="14.72" y="284.94" width="1.64" height="0.9" fill="#ce9178"/><rect x="16.35" y="284.94" width="0.55" height="0.9" fill="#d4d4d4"/><rect x="17.44" y="284.94" width="2.18" height="0.9" fill="#9cdcfe"/><rect x="19.62" y="284.94" width="0.55" height="0.9" fill="#d4d4d4"/><rect x="20.71" y="284.94" width="4.36" height="0.9" fill="#ce9178"/><rect x="25.62" y="284.94" width="1.09" height="0.9" fill="#d4d4d4"/><rect x="10.90" y="286.10" width="0.55" height="0.9" fill="#d4d4d4"/><rect x="11.99" y="286.10" width="1.64" height="0.9" fill="#9cdcfe"/><rect x="13.63" y="286.10" width="0.55" height="0.9" fill="#d4d4d4"/><rect x="14.72" y="286.10" width="1.64" height="0.9" fill="#ce9178"/><rect x="16.35" y="286.10" width="0.55" height="0.9" fill="#d4d4d4"/><rect x="17.44" y="286.10" width="2.18" height="0.9" fill="#9cdcfe"/><rect x="19.62" y="286.10" width="0.55" height="0.9" fill="#d4d4d4"/><rect x="20.71" y="286.10" width="5.45" height="0.9" fill="#ce9178"/><rect x="26.71" y="286.10" width="1.09" height="0.9" fill="#d4d4d4"/><rect x="10.90" y="287.26" width="0.55" height="0.9" fill="#d4d4d4"/><rect x="11.99" y="287.26" width="1.64" height="0.9" fill="#9cdcfe"/><rect x="13.63" y="287.26" width="0.55" height="0.9" fill="#d4d4d4"/><rect x="14.72" y="287.26" width="1.64" height="0.9" fill="#ce9178"/><rect x="16.35" y="287.26" width="0.55" height="0.9" fill="#d4d4d4"/><rect x="17.44" y="287.26" width="2.18" height="0.9" fill="#9cdcfe"/><rect x="19.62" y="287.26" width="0.55" height="0.9" fill="#d4d4d4"/><rect x="20.71" y="287.26" width="4.36" height="0.9" fill="#ce9178"/><rect x="25.62" y="287.26" width="1.09" height="0.9" fill="#d4d4d4"/><rect x="10.90" y="288.42" width="0.55" height="0.9" fill="#d4d4d4"/><rect x="11.99" y="288.42" width="1.64" height="0.9" fill="#9cdcfe"/><rect x="13.63" y="288.42" width="0.55" height="0.9" fill="#d4d4d4"/><rect x="14.72" y="288.42" width="1.64" height="0.9" fill="#ce9178"/><rect x="16.35" y="288.42" width="0.55" height="0.9" fill="#d4d4d4"/><rect x="17.44" y="288.42" width="2.18" height="0.9" fill="#9cdcfe"/><rect x="19.62" y="288.42" width="0.55" height="0.9" fill="#d4d4d4"/><rect x="20.71" y="288.42" width="8.18" height="0.9" fill="#ce9178"/><rect x="29.43" y="288.42" width="1.09" height="0.9" fill="#d4d4d4"/><rect x="10.90" y="289.59" width="0.55" height="0.9" fill="#d4d4d4"/><rect x="11.99" y="289.59" width="1.64" height="0.9" fill="#9cdcfe"/><rect x="13.63" y="289.59" width="0.55" height="0.9" fill="#d4d4d4"/><rect x="14.72" y="289.59" width="1.64" height="0.9" fill="#ce9178"/><rect x="16.35" y="289.59" width="0.55" height="0.9" fill="#d4d4d4"/><rect x="17.44" y="289.59" width="2.18" height="0.9" fill="#9cdcfe"/><rect x="19.62" y="289.59" width="0.55" height="0.9" fill="#d4d4d4"/><rect x="20.71" y="289.59" width="13.08" height="0.9" fill="#ce9178"/><rect x="34.34" y="289.59" width="0.55" height="0.9" fill="#d4d4d4"/><rect x="9.81" y="290.75" width="0.55" height="0.9" fill="#d4d4d4"/><rect x="8.72" y="291.91" width="1.64" height="0.9" fill="#d4d4d4"/><rect x="8.72" y="293.08" width="11.45" height="0.9" fill="#4ec9b0"/><rect x="20.17" y="293.08" width="0.55" height="0.9" fill="#d4d4d4"/><rect x="20.71" y="293.08" width="5.45" height="0.9" fill="#ce9178"/><rect x="26.16" y="293.08" width="1.64" height="0.9" fill="#d4d4d4"/><rect x="9.81" y="294.24" width="2.73" height="0.9" fill="#9cdcfe"/><rect x="12.54" y="294.24" width="0.55" height="0.9" fill="#d4d4d4"/><rect x="13.63" y="294.24" width="6.00" height="0.9" fill="#ce9178"/><rect x="8.72" y="295.40" width="1.09" height="0.9" fill="#d4d4d4"/><rect x="7.63" y="296.56" width="0.55" height="0.9" fill="#d4d4d4"/><rect x="6.54" y="297.73" width="0.55" height="0.9" fill="#d4d4d4"/><rect x="5.45" y="298.89" width="0.55" height="0.9" fill="#d4d4d4"/><rect x="4.36" y="300.05" width="0.55" height="0.9" fill="#d4d4d4"/><rect x="3.27" y="301.22" width="0.55" height="0.9" fill="#d4d4d4"/><rect x="2.18" y="302.38" width="1.09" height="0.9" fill="#d4d4d4"/><rect x="1.09" y="303.54" width="0.55" height="0.9" fill="#d4d4d4"/><rect x="0.00" y="304.71" width="0.55" height="0.9" fill="#d4d4d4"/></svg>
  <div class="abs" style="left:524.5px;top:14px;width:3.5px;height:62px;background:rgba(121,121,121,0.2)"></div>
  <div class="abs" style="left:525.5px;top:116px;width:2.5px;height:1.2px;background:#1b6aa8"></div>
  <div class="abs" style="left:525.5px;top:120px;width:2.5px;height:1.2px;background:#1b6aa8"></div>
  <div class="abs" style="left:525.5px;top:136px;width:2.5px;height:1.2px;background:#1b6aa8"></div>
  <div class="abs" style="left:525.5px;top:143.5px;width:2.5px;height:1.2px;background:#1b6aa8"></div>
  <div class="abs" style="left:525.5px;top:154px;width:2.5px;height:1.2px;background:#1b6aa8"></div>
  <div class="abs" style="left:525.5px;top:182.7px;width:2.5px;height:1.2px;background:#1b6aa8"></div>
  <div class="abs" style="left:525.5px;top:203px;width:2.5px;height:1.2px;background:#1b6aa8"></div>
  <div class="abs" style="left:525.5px;top:263.7px;width:2.5px;height:1.2px;background:#1b6aa8"></div>
</div>

<svg class="abs" style="left:0;top:0" width="660" height="421" viewBox="0 0 660 421"><g fill="#fff" stroke="#74d136" stroke-width="1.3" stroke-linejoin="round"><path d="M266.5 140.2 L492 117.0 L492 120.8 Z"/><path d="M442.9 241.4 L509.5 213.5 L518.5 213.5 Z"/><path d="M372.3 250.6 L495 254.8 L495 258.6 Z"/><path d="M251.8 326.8 L495 319.6 L495 323.4 Z"/></g></svg>
<div class="abs" style="left:489.9px;top:96.9px;width:90.0px;height:30.6px;background:#fff;border:1.3px solid #74d136;border-radius:3px"></div>
<div class="abs" style="left:488.4px;top:185.6px;width:89.3px;height:29.2px;background:#fff;border:1.3px solid #74d136;border-radius:3px"></div>
<div class="abs" style="left:493.3px;top:248.8px;width:88.9px;height:30.4px;background:#fff;border:1.3px solid #74d136;border-radius:3px"></div>
<div class="abs" style="left:493.3px;top:311.9px;width:88.9px;height:31.3px;background:#fff;border:1.3px solid #74d136;border-radius:3px"></div>
<div class="abs" style="left:499.30px;top:107.15px;line-height:10px;white-space:nowrap;color:#333;transform:scaleX(0.8147);transform-origin:0 50%;font-size:8.6px;">SharePoint Rest Calls</div>
<div class="abs" style="left:503.70px;top:189.05px;line-height:10px;white-space:nowrap;color:#333;transform:scaleX(0.8231);transform-origin:0 50%;font-size:8.6px;">Search REST API</div>
<div class="abs" style="left:519.30px;top:201.05px;line-height:10px;white-space:nowrap;color:#333;transform:scaleX(0.8336);transform-origin:0 50%;font-size:8.6px;">support</div>
<div class="abs" style="left:507.40px;top:253.85px;line-height:10px;white-space:nowrap;color:#333;transform:scaleX(0.8344);transform-origin:0 50%;font-size:8.6px;">SharePoint Object</div>
<div class="abs" style="left:526.20px;top:264.95px;line-height:10px;white-space:nowrap;color:#333;transform:scaleX(0.8371);transform-origin:0 50%;font-size:8.6px;">loader</div>
<div class="abs" style="left:521.20px;top:323.25px;line-height:10px;white-space:nowrap;color:#333;transform:scaleX(0.8318);transform-origin:0 50%;font-size:8.6px;">Interfaces</div>

<div id="status" class="abs">
<svg class="abs" style="left:3.5px;top:1.8px" width="5" height="7" viewBox="0 0 5 7"><circle cx="1" cy="1" r="0.8" fill="#fff"/><circle cx="1" cy="6" r="0.8" fill="#fff"/><circle cx="4" cy="1.8" r="0.8" fill="#fff"/><path d="M1 1 V6 M4 1.8 C4 4 1 3.5 1 5.5" stroke="#fff" stroke-width="0.7" fill="none"/></svg><span style="left:9.8px;transform:scaleX(0.9429);transform-origin:0 50%;font-size:6.1px;">master*</span><svg class="abs" style="left:36.8px;top:1.8px" width="7" height="6" viewBox="0 0 7 6"><path d="M1.5 4.2 C0.2 4.2 0.2 2.2 1.5 2.2 C1.7 0.4 4.5 0.3 4.9 1.8 C6.8 1.8 6.8 4.2 5.3 4.2" stroke="#fff" stroke-width="0.7" fill="none"/><path d="M3.4 2.6 V5.8 M2.4 3.6 L3.4 2.6 L4.4 3.6" stroke="#fff" stroke-width="0.7" fill="none"/></svg><svg class="abs" style="left:50px;top:2px" width="6" height="6" viewBox="0 0 6 6"><circle cx="3" cy="3" r="2.6" fill="#fff"/><path d="M1.9 1.9 L4.1 4.1 M4.1 1.9 L1.9 4.1" stroke="#007acc" stroke-width="0.9"/></svg><span style="left:56.7px;transform:scaleX(1.0028);transform-origin:0 50%;font-size:6.1px;">0</span><svg class="abs" style="left:62.6px;top:1.8px" width="6" height="6" viewBox="0 0 6 6"><path d="M3 0.2 L5.9 5.6 H0.1 Z" fill="#fff"/><path d="M3 2 V3.9 M3 4.4 V5" stroke="#007acc" stroke-width="0.7"/></svg><span style="left:70.0px;transform:scaleX(1.0028);transform-origin:0 50%;font-size:6.1px;">0</span><span style="left:471.5px;transform:scaleX(0.9017);transform-origin:0 50%;font-size:6.1px;">Ln 206, Col 9</span><span style="left:511.5px;transform:scaleX(0.8595);transform-origin:0 50%;font-size:6.1px;">Spaces: 2</span><span style="left:542.5px;transform:scaleX(0.8804);transform-origin:0 50%;font-size:6.1px;">UTF-8</span><span style="left:563.5px;transform:scaleX(0.7662);transform-origin:0 50%;font-size:6.1px;">CRLF</span><span style="left:583.5px;transform:scaleX(0.9168);transform-origin:0 50%;font-size:6.1px;">TypeScript</span><span style="left:619.0px;transform:scaleX(0.8037);transform-origin:0 50%;font-size:6.1px;">2.7.2</span><svg class="abs" style="left:637px;top:2px" width="7" height="7" viewBox="0 0 7 7"><circle cx="3.5" cy="3.5" r="3.2" fill="#fff"/><circle cx="2.4" cy="2.7" r="0.5" fill="#007acc"/><circle cx="4.6" cy="2.7" r="0.5" fill="#007acc"/><path d="M2 4.2 C2.6 5.4 4.4 5.4 5 4.2" stroke="#007acc" stroke-width="0.6" fill="none"/></svg><svg class="abs" style="left:651.3px;top:1.6px" width="6" height="7" viewBox="0 0 6 7"><path d="M3 0.5 C1.3 0.5 1.2 2 1.2 3.5 L0.3 5 H5.7 L4.8 3.5 C4.8 2 4.7 0.5 3 0.5 Z" fill="#fff"/><circle cx="3" cy="5.9" r="0.8" fill="#fff"/></svg>
</div>
</body></html>
